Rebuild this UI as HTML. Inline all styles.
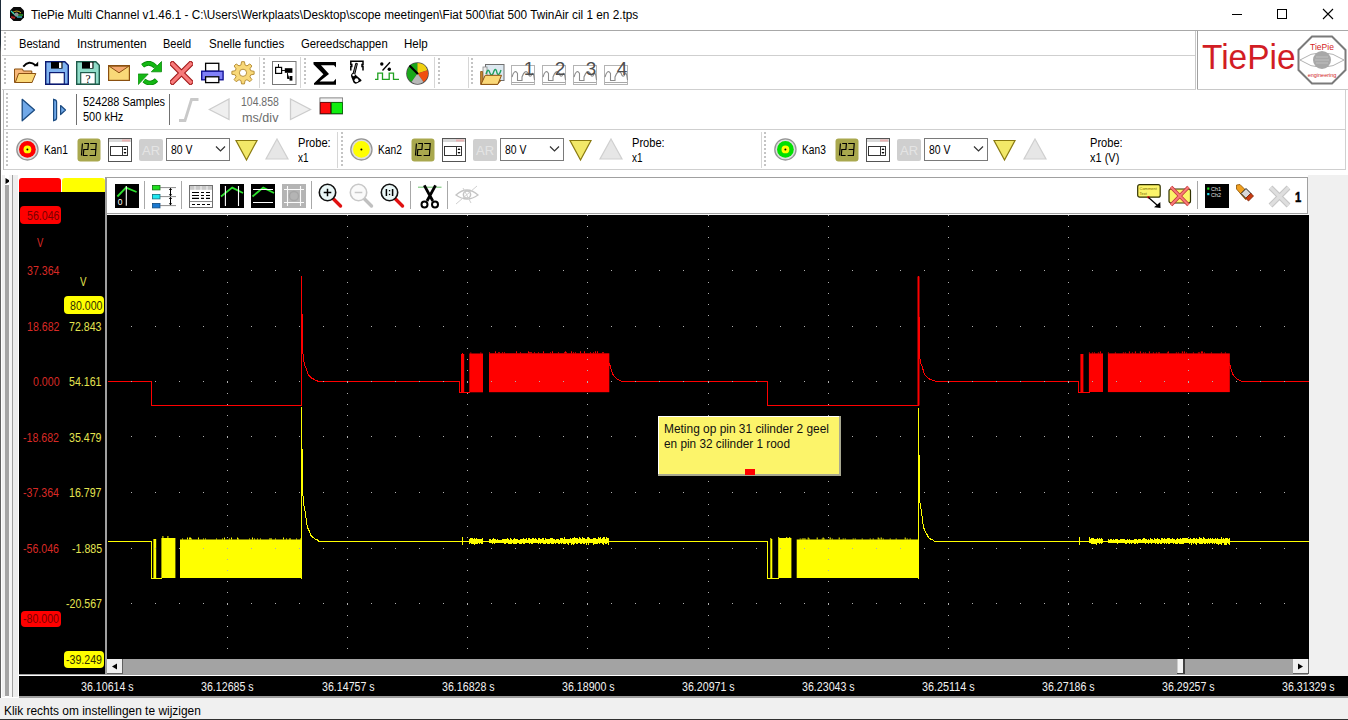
<!DOCTYPE html><html><head><meta charset="utf-8"><style>
html,body{margin:0;padding:0}
body{width:1348px;height:720px;position:relative;overflow:hidden;background:#fff;font-family:"Liberation Sans",sans-serif}
.t{position:absolute;white-space:nowrap;line-height:normal;transform-origin:0 0}
svg{display:block}
</style></head><body>
<div style="position:absolute;left:0px;top:0px;width:1348px;height:30px;background:#fff;"></div>
<div style="position:absolute;left:0px;top:0px;width:1px;height:720px;background:linear-gradient(#1c2a38 0px,#24303c 44px,#6a6a6a 52px,#707070 720px);"></div>
<div class="t" style="left:30.50px;top:8.14px;font-size:12px;color:#000;transform:scaleX(0.9825);">TiePie Multi Channel v1.46.1 - C:\Users\Werkplaats\Desktop\scope meetingen\Fiat 500\fiat 500 TwinAir cil 1 en 2.tps</div>
<svg style="position:absolute;left:9px;top:6px;" width="16" height="16" viewBox="0 0 16 16"><polygon points="4.5,1 11.5,1 15,4.5 15,11.5 11.5,15 4.5,15 1,11.5 1,4.5" fill="#0a0a0a"/>
<path d="M3 7 Q8 3 12 7" stroke="#c8b020" stroke-width="1" fill="none"/>
<path d="M2 5 L7 10 L9 10" stroke="#30e0c0" stroke-width="1.2" fill="none"/>
<path d="M7 9 H14" stroke="#30c030" stroke-width="1.2"/>
<path d="M8 11 H13" stroke="#40d0e0" stroke-width="1.2"/>
<path d="M2 11 L6 12" stroke="#a02020" stroke-width="2"/>
<circle cx="7.5" cy="8.5" r="2" fill="#909090"/></svg>
<div style="position:absolute;left:1232px;top:14px;width:10px;height:1px;background:#000;"></div>
<div style="position:absolute;left:1277px;top:9px;width:10px;height:10px;background:transparent;border:1px solid #000;box-sizing:border-box;"></div>
<svg style="position:absolute;left:1322px;top:8px;" width="12" height="12" viewBox="0 0 12 12"><path d="M1 1L11 11M11 1L1 11" stroke="#000" stroke-width="1.1"/></svg>
<div style="position:absolute;left:1px;top:30px;width:1347px;height:1px;background:#a8a8a8;"></div>
<svg style="position:absolute;left:4px;top:32px;" width="2" height="20" viewBox="0 0 2 20"><rect x="0" y="0" width="2" height="2" fill="#c4c4c4"/><rect x="0" y="4" width="2" height="2" fill="#c4c4c4"/><rect x="0" y="8" width="2" height="2" fill="#c4c4c4"/><rect x="0" y="12" width="2" height="2" fill="#c4c4c4"/><rect x="0" y="16" width="2" height="2" fill="#c4c4c4"/></svg>
<div class="t" style="left:18.50px;top:37.14px;font-size:12px;color:#000;transform:scaleX(0.9273);">Bestand</div>
<div class="t" style="left:76.60px;top:37.14px;font-size:12px;color:#000;transform:scaleX(0.9957);">Instrumenten</div>
<div class="t" style="left:163.40px;top:37.14px;font-size:12px;color:#000;transform:scaleX(0.9153);">Beeld</div>
<div class="t" style="left:208.50px;top:37.14px;font-size:12px;color:#000;transform:scaleX(0.9641);">Snelle functies</div>
<div class="t" style="left:300.60px;top:37.14px;font-size:12px;color:#000;transform:scaleX(0.9414);">Gereedschappen</div>
<div class="t" style="left:404.40px;top:37.14px;font-size:12px;color:#000;transform:scaleX(0.9636);">Help</div>
<div style="position:absolute;left:2px;top:55px;width:1194px;height:1px;background:#cfcfcf;"></div>
<svg style="position:absolute;left:4px;top:58px;" width="2" height="28" viewBox="0 0 2 28"><rect x="0" y="0" width="2" height="2" fill="#c4c4c4"/><rect x="0" y="4" width="2" height="2" fill="#c4c4c4"/><rect x="0" y="8" width="2" height="2" fill="#c4c4c4"/><rect x="0" y="12" width="2" height="2" fill="#c4c4c4"/><rect x="0" y="16" width="2" height="2" fill="#c4c4c4"/><rect x="0" y="20" width="2" height="2" fill="#c4c4c4"/><rect x="0" y="24" width="2" height="2" fill="#c4c4c4"/></svg>
<div style="position:absolute;left:2px;top:89px;width:1194px;height:1px;background:#cfcfcf;"></div>
<div style="position:absolute;left:259px;top:57px;width:1px;height:31px;background:#d6d6d6;"></div>
<div style="position:absolute;left:300px;top:57px;width:1px;height:31px;background:#d6d6d6;"></div>
<div style="position:absolute;left:434px;top:57px;width:1px;height:31px;background:#d6d6d6;"></div>
<div style="position:absolute;left:468px;top:57px;width:1px;height:31px;background:#d6d6d6;"></div>
<svg style="position:absolute;left:263px;top:58px;" width="2" height="28" viewBox="0 0 2 28"><rect x="0" y="0" width="2" height="2" fill="#c4c4c4"/><rect x="0" y="4" width="2" height="2" fill="#c4c4c4"/><rect x="0" y="8" width="2" height="2" fill="#c4c4c4"/><rect x="0" y="12" width="2" height="2" fill="#c4c4c4"/><rect x="0" y="16" width="2" height="2" fill="#c4c4c4"/><rect x="0" y="20" width="2" height="2" fill="#c4c4c4"/><rect x="0" y="24" width="2" height="2" fill="#c4c4c4"/></svg>
<svg style="position:absolute;left:304px;top:58px;" width="2" height="28" viewBox="0 0 2 28"><rect x="0" y="0" width="2" height="2" fill="#c4c4c4"/><rect x="0" y="4" width="2" height="2" fill="#c4c4c4"/><rect x="0" y="8" width="2" height="2" fill="#c4c4c4"/><rect x="0" y="12" width="2" height="2" fill="#c4c4c4"/><rect x="0" y="16" width="2" height="2" fill="#c4c4c4"/><rect x="0" y="20" width="2" height="2" fill="#c4c4c4"/><rect x="0" y="24" width="2" height="2" fill="#c4c4c4"/></svg>
<svg style="position:absolute;left:438px;top:58px;" width="2" height="28" viewBox="0 0 2 28"><rect x="0" y="0" width="2" height="2" fill="#c4c4c4"/><rect x="0" y="4" width="2" height="2" fill="#c4c4c4"/><rect x="0" y="8" width="2" height="2" fill="#c4c4c4"/><rect x="0" y="12" width="2" height="2" fill="#c4c4c4"/><rect x="0" y="16" width="2" height="2" fill="#c4c4c4"/><rect x="0" y="20" width="2" height="2" fill="#c4c4c4"/><rect x="0" y="24" width="2" height="2" fill="#c4c4c4"/></svg>
<svg style="position:absolute;left:471px;top:58px;" width="2" height="28" viewBox="0 0 2 28"><rect x="0" y="0" width="2" height="2" fill="#c4c4c4"/><rect x="0" y="4" width="2" height="2" fill="#c4c4c4"/><rect x="0" y="8" width="2" height="2" fill="#c4c4c4"/><rect x="0" y="12" width="2" height="2" fill="#c4c4c4"/><rect x="0" y="16" width="2" height="2" fill="#c4c4c4"/><rect x="0" y="20" width="2" height="2" fill="#c4c4c4"/><rect x="0" y="24" width="2" height="2" fill="#c4c4c4"/></svg>
<div style="position:absolute;left:1195px;top:31px;width:1px;height:58px;background:#c8c8c8;"></div>
<div style="position:absolute;left:1197px;top:30px;width:151px;height:1px;background:#a8a8a8;"></div>
<div style="position:absolute;left:1197px;top:31px;width:1px;height:58px;background:#a0a0a0;"></div>
<div style="position:absolute;left:1197px;top:89px;width:151px;height:1px;background:#c8c8c8;"></div>
<div class="t" style="left:1201.80px;top:37.33px;font-size:35px;color:#d21d24;transform:scaleX(0.9551);">TiePie</div>
<svg style="position:absolute;left:1297px;top:35px;" width="50" height="50" viewBox="0 0 50 50"><polygon points="15,1.5 35,1.5 48.5,15 48.5,35 35,48.5 15,48.5 1.5,35 1.5,15" fill="#fff" stroke="#7a7a7a" stroke-width="2"/>
<text x="25" y="14.5" font-size="8.5" fill="#d21d24" text-anchor="middle" font-family="Liberation Sans">TiePie</text>
<path d="M3 25 Q25 10 47 25 Q25 40 3 25" stroke="#909090" stroke-width="0.7" fill="none"/>
<circle cx="25" cy="25" r="9" fill="#a8a8a8"/>
<path d="M19 22H31M18 25H32M19 28H31" stroke="#d0d0d0" stroke-width="0.6"/>
<text x="25" y="42" font-size="5.5" fill="#d21d24" text-anchor="middle" font-family="Liberation Sans">engineering</text></svg>
<div style="position:absolute;left:3px;top:90px;width:1px;height:84px;background:#bdbdbd;"></div>
<div style="position:absolute;left:1345px;top:90px;width:1px;height:84px;background:#d0d0d0;"></div>
<svg style="position:absolute;left:6px;top:93px;" width="2" height="34" viewBox="0 0 2 34"><rect x="0" y="0" width="2" height="2" fill="#c4c4c4"/><rect x="0" y="4" width="2" height="2" fill="#c4c4c4"/><rect x="0" y="8" width="2" height="2" fill="#c4c4c4"/><rect x="0" y="12" width="2" height="2" fill="#c4c4c4"/><rect x="0" y="16" width="2" height="2" fill="#c4c4c4"/><rect x="0" y="20" width="2" height="2" fill="#c4c4c4"/><rect x="0" y="24" width="2" height="2" fill="#c4c4c4"/><rect x="0" y="28" width="2" height="2" fill="#c4c4c4"/><rect x="0" y="32" width="2" height="2" fill="#c4c4c4"/></svg>
<div style="position:absolute;left:76px;top:94px;width:1px;height:31px;background:#707070;"></div>
<div style="position:absolute;left:169px;top:94px;width:1px;height:31px;background:#707070;"></div>
<div class="t" style="left:82.70px;top:95.14px;font-size:12px;color:#000;transform:scaleX(0.9101);">524288 Samples</div>
<div class="t" style="left:82.70px;top:110.14px;font-size:12px;color:#000;transform:scaleX(0.9159);">500 kHz</div>
<div class="t" style="left:240.90px;top:95.44px;font-size:12px;color:#6d6d6d;transform:scaleX(0.8710);">104.858</div>
<div class="t" style="left:241.50px;top:111.14px;font-size:12px;color:#6d6d6d;transform:scaleX(1.0519);">ms/div</div>
<div style="position:absolute;left:4px;top:129px;width:1342px;height:1px;background:#cfcfcf;"></div>
<svg style="position:absolute;left:6px;top:132px;" width="2" height="36" viewBox="0 0 2 36"><rect x="0" y="0" width="2" height="2" fill="#c4c4c4"/><rect x="0" y="4" width="2" height="2" fill="#c4c4c4"/><rect x="0" y="8" width="2" height="2" fill="#c4c4c4"/><rect x="0" y="12" width="2" height="2" fill="#c4c4c4"/><rect x="0" y="16" width="2" height="2" fill="#c4c4c4"/><rect x="0" y="20" width="2" height="2" fill="#c4c4c4"/><rect x="0" y="24" width="2" height="2" fill="#c4c4c4"/><rect x="0" y="28" width="2" height="2" fill="#c4c4c4"/><rect x="0" y="32" width="2" height="2" fill="#c4c4c4"/></svg>
<svg style="position:absolute;left:16px;top:138px;" width="24" height="24" viewBox="0 0 24 24"><circle cx="11.4" cy="11.4" r="10.6" fill="#dedede" stroke="#959595" stroke-width="1.3"/>
<circle cx="11.4" cy="11.4" r="8.4" fill="#ff0000"/><circle cx="11.4" cy="11.4" r="3.9" fill="#ffff00"/><circle cx="11.4" cy="11.4" r="1" fill="#000"/></svg>
<div class="t" style="left:43.70px;top:143.14px;font-size:12px;color:#000;transform:scaleX(0.8500);">Kan1</div>
<svg style="position:absolute;left:77px;top:138px;" width="24" height="24" viewBox="0 0 24 24"><rect x="0.5" y="0.5" width="23" height="23" rx="3" fill="#a9a84e"/>
<path d="M5.4 5.5 L4.5 17.5" stroke="#000" stroke-width="1.15" fill="none"/>
<path d="M7.2 5.5 H11.4 L10.9 11.5 H6.8 L6.3 17.5 H10.6" stroke="#000" stroke-width="1.15" fill="none"/>
<path d="M13.2 5.5 H19.2 L18.4 17.5 H12.6 M13.6 11.5 H18.8" stroke="#000" stroke-width="1.15" fill="none"/></svg>
<svg style="position:absolute;left:108px;top:138px;" width="25" height="25" viewBox="0 0 25 25"><rect x="0.5" y="0.5" width="23" height="23" fill="#fff" stroke="#555" stroke-width="1"/>
<rect x="1" y="1" width="22" height="3" fill="#d8d8d8"/><rect x="14" y="1.5" width="8" height="2" fill="#e8b0b0"/>
<rect x="2.5" y="8.5" width="15" height="9" fill="#fff" stroke="#333" stroke-width="1"/>
<rect x="14.5" y="8.5" width="5" height="9" fill="#fff" stroke="#333" stroke-width="1"/>
<path d="M15.5 12 L17 10 L18.5 12Z M15.5 14 L17 16 L18.5 14Z" fill="#000"/></svg>
<svg style="position:absolute;left:139px;top:139px;" width="24" height="22" viewBox="0 0 24 22"><rect x="0" y="0" width="24" height="22" rx="2" fill="#cfcfcf"/>
<text x="12" y="16" font-size="13" fill="#e4e4e4" text-anchor="middle" font-family="Liberation Sans">AR</text></svg>
<div style="position:absolute;left:166px;top:138px;width:64px;height:23px;background:#fff;border:1px solid #7a7a7a;box-sizing:border-box;"></div>
<div class="t" style="left:171.30px;top:142.94px;font-size:12px;color:#000;transform:scaleX(0.8664);">80 V</div>
<svg style="position:absolute;left:215px;top:145px;" width="12" height="8" viewBox="0 0 12 8"><path d="M1 1.5L5.5 6L10 1.5" stroke="#333" stroke-width="1.2" fill="none"/></svg>
<svg style="position:absolute;left:235px;top:139px;" width="23" height="23" viewBox="0 0 23 23"><polygon points="1,1.5 22,1.5 11.5,21" fill="#f2e868" stroke="#8a7a10" stroke-width="1.2"/></svg>
<svg style="position:absolute;left:265px;top:138px;" width="24" height="23" viewBox="0 0 24 23"><polygon points="12,1 23,21 1,21" fill="#e6e6e6" stroke="#cfcfcf" stroke-width="1.2"/></svg>
<div class="t" style="left:297.50px;top:135.94px;font-size:12px;color:#000;transform:scaleX(0.9237);">Probe:</div>
<div class="t" style="left:297.50px;top:150.64px;font-size:12px;color:#000;transform:scaleX(0.8268);">x1</div>
<div style="position:absolute;left:337px;top:132px;width:1px;height:36px;background:#d6d6d6;"></div>
<svg style="position:absolute;left:341px;top:132px;" width="2" height="36" viewBox="0 0 2 36"><rect x="0" y="0" width="2" height="2" fill="#c4c4c4"/><rect x="0" y="4" width="2" height="2" fill="#c4c4c4"/><rect x="0" y="8" width="2" height="2" fill="#c4c4c4"/><rect x="0" y="12" width="2" height="2" fill="#c4c4c4"/><rect x="0" y="16" width="2" height="2" fill="#c4c4c4"/><rect x="0" y="20" width="2" height="2" fill="#c4c4c4"/><rect x="0" y="24" width="2" height="2" fill="#c4c4c4"/><rect x="0" y="28" width="2" height="2" fill="#c4c4c4"/><rect x="0" y="32" width="2" height="2" fill="#c4c4c4"/></svg>
<svg style="position:absolute;left:350px;top:138px;" width="24" height="24" viewBox="0 0 24 24"><circle cx="11.4" cy="11.4" r="10.6" fill="#dedede" stroke="#959595" stroke-width="1.3"/>
<circle cx="11.4" cy="11.4" r="8.4" fill="#ffff00"/><circle cx="11.4" cy="11.4" r="3.9" fill="#ffff00"/><circle cx="11.4" cy="11.4" r="1" fill="#000"/></svg>
<div class="t" style="left:377.70px;top:143.14px;font-size:12px;color:#000;transform:scaleX(0.8500);">Kan2</div>
<svg style="position:absolute;left:411px;top:138px;" width="24" height="24" viewBox="0 0 24 24"><rect x="0.5" y="0.5" width="23" height="23" rx="3" fill="#a9a84e"/>
<path d="M5.4 5.5 L4.5 17.5" stroke="#000" stroke-width="1.15" fill="none"/>
<path d="M7.2 5.5 H11.4 L10.9 11.5 H6.8 L6.3 17.5 H10.6" stroke="#000" stroke-width="1.15" fill="none"/>
<path d="M13.2 5.5 H19.2 L18.4 17.5 H12.6 M13.6 11.5 H18.8" stroke="#000" stroke-width="1.15" fill="none"/></svg>
<svg style="position:absolute;left:442px;top:138px;" width="25" height="25" viewBox="0 0 25 25"><rect x="0.5" y="0.5" width="23" height="23" fill="#fff" stroke="#555" stroke-width="1"/>
<rect x="1" y="1" width="22" height="3" fill="#d8d8d8"/><rect x="14" y="1.5" width="8" height="2" fill="#e8b0b0"/>
<rect x="2.5" y="8.5" width="15" height="9" fill="#fff" stroke="#333" stroke-width="1"/>
<rect x="14.5" y="8.5" width="5" height="9" fill="#fff" stroke="#333" stroke-width="1"/>
<path d="M15.5 12 L17 10 L18.5 12Z M15.5 14 L17 16 L18.5 14Z" fill="#000"/></svg>
<svg style="position:absolute;left:473px;top:139px;" width="24" height="22" viewBox="0 0 24 22"><rect x="0" y="0" width="24" height="22" rx="2" fill="#cfcfcf"/>
<text x="12" y="16" font-size="13" fill="#e4e4e4" text-anchor="middle" font-family="Liberation Sans">AR</text></svg>
<div style="position:absolute;left:500px;top:138px;width:64px;height:23px;background:#fff;border:1px solid #7a7a7a;box-sizing:border-box;"></div>
<div class="t" style="left:505.30px;top:142.94px;font-size:12px;color:#000;transform:scaleX(0.8664);">80 V</div>
<svg style="position:absolute;left:549px;top:145px;" width="12" height="8" viewBox="0 0 12 8"><path d="M1 1.5L5.5 6L10 1.5" stroke="#333" stroke-width="1.2" fill="none"/></svg>
<svg style="position:absolute;left:569px;top:139px;" width="23" height="23" viewBox="0 0 23 23"><polygon points="1,1.5 22,1.5 11.5,21" fill="#f2e868" stroke="#8a7a10" stroke-width="1.2"/></svg>
<svg style="position:absolute;left:599px;top:138px;" width="24" height="23" viewBox="0 0 24 23"><polygon points="12,1 23,21 1,21" fill="#e6e6e6" stroke="#cfcfcf" stroke-width="1.2"/></svg>
<div class="t" style="left:631.50px;top:135.94px;font-size:12px;color:#000;transform:scaleX(0.9237);">Probe:</div>
<div class="t" style="left:631.50px;top:150.64px;font-size:12px;color:#000;transform:scaleX(0.8268);">x1</div>
<div style="position:absolute;left:761px;top:132px;width:1px;height:36px;background:#d6d6d6;"></div>
<svg style="position:absolute;left:764px;top:132px;" width="2" height="36" viewBox="0 0 2 36"><rect x="0" y="0" width="2" height="2" fill="#c4c4c4"/><rect x="0" y="4" width="2" height="2" fill="#c4c4c4"/><rect x="0" y="8" width="2" height="2" fill="#c4c4c4"/><rect x="0" y="12" width="2" height="2" fill="#c4c4c4"/><rect x="0" y="16" width="2" height="2" fill="#c4c4c4"/><rect x="0" y="20" width="2" height="2" fill="#c4c4c4"/><rect x="0" y="24" width="2" height="2" fill="#c4c4c4"/><rect x="0" y="28" width="2" height="2" fill="#c4c4c4"/><rect x="0" y="32" width="2" height="2" fill="#c4c4c4"/></svg>
<svg style="position:absolute;left:774px;top:138px;" width="24" height="24" viewBox="0 0 24 24"><circle cx="11.4" cy="11.4" r="10.6" fill="#dedede" stroke="#959595" stroke-width="1.3"/>
<circle cx="11.4" cy="11.4" r="8.4" fill="#00e000"/><circle cx="11.4" cy="11.4" r="3.9" fill="#ffff00"/><circle cx="11.4" cy="11.4" r="1" fill="#000"/></svg>
<div class="t" style="left:801.70px;top:143.14px;font-size:12px;color:#000;transform:scaleX(0.8500);">Kan3</div>
<svg style="position:absolute;left:835px;top:138px;" width="24" height="24" viewBox="0 0 24 24"><rect x="0.5" y="0.5" width="23" height="23" rx="3" fill="#a9a84e"/>
<path d="M5.4 5.5 L4.5 17.5" stroke="#000" stroke-width="1.15" fill="none"/>
<path d="M7.2 5.5 H11.4 L10.9 11.5 H6.8 L6.3 17.5 H10.6" stroke="#000" stroke-width="1.15" fill="none"/>
<path d="M13.2 5.5 H19.2 L18.4 17.5 H12.6 M13.6 11.5 H18.8" stroke="#000" stroke-width="1.15" fill="none"/></svg>
<svg style="position:absolute;left:866px;top:138px;" width="25" height="25" viewBox="0 0 25 25"><rect x="0.5" y="0.5" width="23" height="23" fill="#fff" stroke="#555" stroke-width="1"/>
<rect x="1" y="1" width="22" height="3" fill="#d8d8d8"/><rect x="14" y="1.5" width="8" height="2" fill="#e8b0b0"/>
<rect x="2.5" y="8.5" width="15" height="9" fill="#fff" stroke="#333" stroke-width="1"/>
<rect x="14.5" y="8.5" width="5" height="9" fill="#fff" stroke="#333" stroke-width="1"/>
<path d="M15.5 12 L17 10 L18.5 12Z M15.5 14 L17 16 L18.5 14Z" fill="#000"/></svg>
<svg style="position:absolute;left:897px;top:139px;" width="24" height="22" viewBox="0 0 24 22"><rect x="0" y="0" width="24" height="22" rx="2" fill="#cfcfcf"/>
<text x="12" y="16" font-size="13" fill="#e4e4e4" text-anchor="middle" font-family="Liberation Sans">AR</text></svg>
<div style="position:absolute;left:924px;top:138px;width:64px;height:23px;background:#fff;border:1px solid #7a7a7a;box-sizing:border-box;"></div>
<div class="t" style="left:929.30px;top:142.94px;font-size:12px;color:#000;transform:scaleX(0.8664);">80 V</div>
<svg style="position:absolute;left:973px;top:145px;" width="12" height="8" viewBox="0 0 12 8"><path d="M1 1.5L5.5 6L10 1.5" stroke="#333" stroke-width="1.2" fill="none"/></svg>
<svg style="position:absolute;left:993px;top:139px;" width="23" height="23" viewBox="0 0 23 23"><polygon points="1,1.5 22,1.5 11.5,21" fill="#f2e868" stroke="#8a7a10" stroke-width="1.2"/></svg>
<svg style="position:absolute;left:1023px;top:138px;" width="24" height="23" viewBox="0 0 24 23"><polygon points="12,1 23,21 1,21" fill="#e6e6e6" stroke="#cfcfcf" stroke-width="1.2"/></svg>
<div class="t" style="left:1090.30px;top:135.94px;font-size:12px;color:#000;transform:scaleX(0.9237);">Probe:</div>
<div class="t" style="left:1090.30px;top:150.64px;font-size:12px;color:#000;transform:scaleX(0.9156);">x1 (V)</div>
<div style="position:absolute;left:4px;top:169px;width:1342px;height:1px;background:#cfcfcf;"></div>
<div style="position:absolute;left:0px;top:170px;width:1348px;height:550px;background:#fff;"></div>
<div style="position:absolute;left:1px;top:170px;width:1347px;height:6px;background:#fff;"></div>
<div style="position:absolute;left:1308px;top:175px;width:40px;height:501px;background:#f0f0f0;"></div>
<svg style="position:absolute;left:4px;top:177px;" width="8" height="8" viewBox="0 0 8 8"><path d="M1.5 1 L6.5 4 L1.5 7Z" fill="#000"/></svg>
<div style="position:absolute;left:2px;top:175px;width:3px;height:522px;background:#f0f0f0;"></div>
<div style="position:absolute;left:9px;top:175px;width:3px;height:522px;background:#f6f6f6;"></div>
<div style="position:absolute;left:13px;top:175px;width:5px;height:522px;background:#eeeeee;"></div>
<div style="position:absolute;left:5px;top:185px;width:4px;height:511px;background:#a4a4a4;"></div>
<div style="position:absolute;left:12px;top:175px;width:1px;height:522px;background:#a0a0a0;"></div>
<div style="position:absolute;left:0px;top:170px;width:1px;height:550px;background:#606060;"></div>
<div style="position:absolute;left:19px;top:178px;width:42px;height:14px;background:#ff0000;border-radius:3px 3px 0 0;"></div>
<div style="position:absolute;left:62px;top:178px;width:43px;height:14px;background:#ffff00;border-radius:3px 3px 0 0;"></div>
<div style="position:absolute;left:19px;top:192px;width:86px;height:482px;background:#000;"></div>
<div style="position:absolute;left:105px;top:177px;width:2px;height:498px;background:#a0a0a0;"></div>
<div style="position:absolute;left:19px;top:674px;width:1289px;height:1px;background:#a0a0a0;"></div>
<div style="position:absolute;left:19px;top:675px;width:1289px;height:1px;background:#fff;"></div>
<div style="position:absolute;left:107px;top:177px;width:1201px;height:37px;background:#fff;border:1px solid #a0a0a0;border-left:none;box-sizing:border-box;"></div>
<div style="position:absolute;left:107px;top:214px;width:1202px;height:445px;background:#000;"></div>
<div style="position:absolute;left:107px;top:214px;width:1202px;height:1px;background:#fafafa;"></div>
<div style="position:absolute;left:107px;top:659px;width:1201px;height:15px;background:#a3a3a3;"></div>
<svg style="position:absolute;left:107px;top:659px;" width="16" height="16" viewBox="0 0 16 16"><rect x="0" y="0" width="15" height="15" fill="#f0f0f0"/><rect x="0" y="14" width="16" height="1" fill="#606060"/><rect x="15" y="0" width="1" height="15" fill="#606060"/><path d="M5 7.5 L10 4.5 L10 10.5Z" fill="#000"/></svg>
<svg style="position:absolute;left:1293px;top:659px;" width="16" height="16" viewBox="0 0 16 16"><rect x="0" y="0" width="15" height="15" fill="#f0f0f0"/><rect x="0" y="14" width="16" height="1" fill="#606060"/><rect x="15" y="0" width="1" height="15" fill="#606060"/><path d="M5 4.5 L10 7.5 L5 10.5Z" fill="#000"/></svg>
<svg style="position:absolute;left:1177px;top:659px;" width="8" height="16" viewBox="0 0 8 16"><rect x="0.5" y="0" width="7" height="15" fill="#f4f4f4"/><rect x="6" y="0" width="2" height="15" fill="#404040"/><rect x="0" y="14" width="8" height="1" fill="#404040"/></svg>
<div style="position:absolute;left:19px;top:676px;width:1329px;height:20px;background:#000;"></div>
<div style="position:absolute;left:19px;top:696px;width:1329px;height:2px;background:#a0a0a0;"></div>
<div style="position:absolute;left:0px;top:698px;width:1348px;height:22px;background:#f0f0f0;"></div>
<div style="position:absolute;left:0px;top:719px;width:1348px;height:1px;background:#303030;"></div>
<div class="t" style="left:3.60px;top:703.94px;font-size:12px;color:#000;transform:scaleX(0.9934);">Klik rechts om instellingen te wijzigen</div>
<div class="t" style="left:81.35px;top:679.94px;font-size:12px;color:#f2f2f2;transform:scaleX(0.8872);">36.10614 s</div>
<div class="t" style="left:201.45px;top:679.94px;font-size:12px;color:#f2f2f2;transform:scaleX(0.8872);">36.12685 s</div>
<div class="t" style="left:321.55px;top:679.94px;font-size:12px;color:#f2f2f2;transform:scaleX(0.8872);">36.14757 s</div>
<div class="t" style="left:441.65px;top:679.94px;font-size:12px;color:#f2f2f2;transform:scaleX(0.8872);">36.16828 s</div>
<div class="t" style="left:561.75px;top:679.94px;font-size:12px;color:#f2f2f2;transform:scaleX(0.8872);">36.18900 s</div>
<div class="t" style="left:681.85px;top:679.94px;font-size:12px;color:#f2f2f2;transform:scaleX(0.8872);">36.20971 s</div>
<div class="t" style="left:801.95px;top:679.94px;font-size:12px;color:#f2f2f2;transform:scaleX(0.8872);">36.23043 s</div>
<div class="t" style="left:922.05px;top:679.94px;font-size:12px;color:#f2f2f2;transform:scaleX(0.9009);">36.25114 s</div>
<div class="t" style="left:1042.15px;top:679.94px;font-size:12px;color:#f2f2f2;transform:scaleX(0.8872);">36.27186 s</div>
<div class="t" style="left:1162.25px;top:679.94px;font-size:12px;color:#f2f2f2;transform:scaleX(0.8872);">36.29257 s</div>
<div class="t" style="left:1282.35px;top:679.94px;font-size:12px;color:#f2f2f2;transform:scaleX(0.8872);">36.31329 s</div>
<div class="t" style="left:26.72px;top:264.44px;font-size:12px;color:#d82a26;transform:scaleX(0.8850);">37.364</div>
<div class="t" style="left:26.72px;top:319.94px;font-size:12px;color:#d82a26;transform:scaleX(0.8850);">18.682</div>
<div class="t" style="left:69.22px;top:319.94px;font-size:12px;color:#e4e450;transform:scaleX(0.8850);">72.843</div>
<div class="t" style="left:32.65px;top:375.44px;font-size:12px;color:#d82a26;transform:scaleX(0.8850);">0.000</div>
<div class="t" style="left:69.22px;top:375.44px;font-size:12px;color:#e4e450;transform:scaleX(0.8850);">54.161</div>
<div class="t" style="left:23.18px;top:430.94px;font-size:12px;color:#d82a26;transform:scaleX(0.8850);">-18.682</div>
<div class="t" style="left:69.22px;top:430.94px;font-size:12px;color:#e4e450;transform:scaleX(0.8850);">35.479</div>
<div class="t" style="left:23.18px;top:486.44px;font-size:12px;color:#d82a26;transform:scaleX(0.8850);">-37.364</div>
<div class="t" style="left:69.22px;top:486.44px;font-size:12px;color:#e4e450;transform:scaleX(0.8850);">16.797</div>
<div class="t" style="left:23.18px;top:541.94px;font-size:12px;color:#d82a26;transform:scaleX(0.8850);">-56.046</div>
<div class="t" style="left:71.61px;top:541.94px;font-size:12px;color:#e4e450;transform:scaleX(0.8850);">-1.885</div>
<div class="t" style="left:65.68px;top:597.44px;font-size:12px;color:#e4e450;transform:scaleX(0.8850);">-20.567</div>
<div class="t" style="left:37.00px;top:235.84px;font-size:12px;color:#d82a26;transform:scaleX(0.7875);">V</div>
<div class="t" style="left:80.00px;top:275.14px;font-size:12px;color:#e4e450;transform:scaleX(0.8125);">V</div>
<div style="position:absolute;left:20px;top:206px;width:41px;height:18px;background:#ff0000;border-radius:4px;"></div>
<div class="t" style="left:26.72px;top:208.64px;font-size:12px;color:#7a0000;transform:scaleX(0.8850);">56.046</div>
<div style="position:absolute;left:21px;top:611px;width:40px;height:16px;background:#ff0000;border-radius:4px;"></div>
<div class="t" style="left:23.18px;top:612.44px;font-size:12px;color:#7a0000;transform:scaleX(0.8850);">-80.000</div>
<div style="position:absolute;left:63.5px;top:296px;width:40.5px;height:17.5px;background:#ffff00;border-radius:4px;"></div>
<div class="t" style="left:69.52px;top:299.14px;font-size:12px;color:#303000;transform:scaleX(0.8850);">80.000</div>
<div style="position:absolute;left:63.5px;top:651px;width:40.5px;height:17px;background:#ffff00;border-radius:4px;"></div>
<div class="t" style="left:65.98px;top:653.14px;font-size:12px;color:#303000;transform:scaleX(0.8850);">-39.249</div>
<svg style="position:absolute;left:107px;top:214px" width="1202" height="445" viewBox="0 0 1202 445"><path d="M0.50,167.50 L44.50,167.50 L44.50,191.50 L194.50,191.50 L194.50,62.50 L195.50,135.50 L195.50,135.50 L196.50,144.50 L197.50,150.50 L199.50,155.50 L200.50,158.50 L201.50,161.50 L203.50,162.50 L204.50,164.50 L205.50,164.50 L207.50,165.50 L208.50,166.50 L209.50,166.50 L211.50,167.50 L352.50,167.50 L352.50,178.50 L362.50,178.50 M502.50,149.50 L502.50,149.50 L503.50,153.50 L504.50,156.50 L505.50,159.50 L506.50,161.50 L507.50,162.50 L508.50,163.50 L509.50,164.50 L510.50,165.50 L511.50,165.50 L512.50,166.50 L513.50,166.50 L514.50,167.50 L660.50,167.50 L660.50,191.50 L811.50,191.50 L811.50,62.50 L812.50,141.50 L812.50,141.50 L813.50,148.50 L815.50,153.50 L816.50,157.50 L817.50,160.50 L819.50,162.50 L820.50,163.50 L821.50,164.50 L823.50,165.50 L824.50,165.50 L825.50,166.50 L827.50,166.50 L828.50,167.50 L971.50,167.50 L971.50,178.50 L982.50,178.50 M1122.50,149.50 L1122.50,149.50 L1123.50,153.50 L1124.50,156.50 L1125.50,159.50 L1126.50,161.50 L1127.50,162.50 L1128.50,163.50 L1129.50,164.50 L1130.50,165.50 L1131.50,165.50 L1132.50,166.50 L1133.50,166.50 L1134.50,167.50 L1201.50,167.50" stroke="#ff0000" stroke-width="1" fill="none" shape-rendering="crispEdges"/><path d="M811.50,62.50 L811.50,191.50" stroke="#ff0000" stroke-width="2"/><g fill="#ff0000"><rect x="354.00" y="140.00" width="3.20" height="38.50"/><rect x="355.00" y="139.00" width="1" height="1"/><rect x="362.30" y="139.50" width="13.70" height="38.80"/><rect x="363.30" y="138.50" width="1" height="1"/><rect x="373.30" y="138.50" width="1" height="1"/><rect x="382.00" y="139.30" width="120.30" height="38.90"/><rect x="382.00" y="138.30" width="1" height="1"/><rect x="388.00" y="137.30" width="1" height="2"/><rect x="391.00" y="138.30" width="1" height="1"/><rect x="392.00" y="138.30" width="1" height="1"/><rect x="395.00" y="138.30" width="1" height="1"/><rect x="397.00" y="138.30" width="1" height="1"/><rect x="409.00" y="137.30" width="1" height="2"/><rect x="413.00" y="138.30" width="1" height="1"/><rect x="421.00" y="137.30" width="1" height="2"/><rect x="422.00" y="138.30" width="1" height="1"/><rect x="423.00" y="138.30" width="1" height="1"/><rect x="424.00" y="138.30" width="1" height="1"/><rect x="427.00" y="138.30" width="1" height="1"/><rect x="431.00" y="138.30" width="1" height="1"/><rect x="436.00" y="137.30" width="1" height="2"/><rect x="443.00" y="138.30" width="1" height="1"/><rect x="445.00" y="137.30" width="1" height="2"/><rect x="451.00" y="138.30" width="1" height="1"/><rect x="457.00" y="138.30" width="1" height="1"/><rect x="458.00" y="137.30" width="1" height="2"/><rect x="459.00" y="138.30" width="1" height="1"/><rect x="464.00" y="137.30" width="1" height="2"/><rect x="466.00" y="138.30" width="1" height="1"/><rect x="468.00" y="138.30" width="1" height="1"/><rect x="473.00" y="137.30" width="1" height="2"/><rect x="477.00" y="137.30" width="1" height="2"/><rect x="483.00" y="138.30" width="1" height="1"/><rect x="486.00" y="138.30" width="1" height="1"/><rect x="488.00" y="137.30" width="1" height="2"/><rect x="490.00" y="137.30" width="1" height="2"/><rect x="495.00" y="138.30" width="1" height="1"/><rect x="496.00" y="138.30" width="1" height="1"/><rect x="973.40" y="140.00" width="3.00" height="38.30"/><rect x="981.90" y="139.40" width="14.10" height="38.60"/><rect x="981.90" y="138.40" width="1" height="1"/><rect x="984.90" y="138.40" width="1" height="1"/><rect x="986.90" y="138.40" width="1" height="1"/><rect x="990.90" y="138.40" width="1" height="1"/><rect x="992.90" y="137.40" width="1" height="2"/><rect x="1000.90" y="139.40" width="121.90" height="38.70"/><rect x="1000.90" y="138.40" width="1" height="1"/><rect x="1007.90" y="138.40" width="1" height="1"/><rect x="1015.90" y="138.40" width="1" height="1"/><rect x="1017.90" y="138.40" width="1" height="1"/><rect x="1021.90" y="137.40" width="1" height="2"/><rect x="1024.90" y="138.40" width="1" height="1"/><rect x="1027.90" y="137.40" width="1" height="2"/><rect x="1032.90" y="137.40" width="1" height="2"/><rect x="1035.90" y="138.40" width="1" height="1"/><rect x="1037.90" y="138.40" width="1" height="1"/><rect x="1041.90" y="137.40" width="1" height="2"/><rect x="1045.90" y="138.40" width="1" height="1"/><rect x="1048.90" y="138.40" width="1" height="1"/><rect x="1050.90" y="138.40" width="1" height="1"/><rect x="1051.90" y="138.40" width="1" height="1"/><rect x="1059.90" y="138.40" width="1" height="1"/><rect x="1060.90" y="137.40" width="1" height="2"/><rect x="1068.90" y="138.40" width="1" height="1"/><rect x="1070.90" y="138.40" width="1" height="1"/><rect x="1074.90" y="137.40" width="1" height="2"/><rect x="1076.90" y="137.40" width="1" height="2"/><rect x="1078.90" y="138.40" width="1" height="1"/><rect x="1085.90" y="138.40" width="1" height="1"/><rect x="1090.90" y="138.40" width="1" height="1"/><rect x="1091.90" y="138.40" width="1" height="1"/><rect x="1093.90" y="137.40" width="1" height="2"/><rect x="1094.90" y="137.40" width="1" height="2"/><rect x="1096.90" y="138.40" width="1" height="1"/><rect x="1103.90" y="138.40" width="1" height="1"/><rect x="1113.90" y="138.40" width="1" height="1"/><rect x="1117.90" y="138.40" width="1" height="1"/></g><path d="M0.50,327.50 L44.50,327.50 L44.50,364.50 L54.50,364.50 M194.50,364.50 L194.50,193.50 L195.50,274.50 L195.50,274.50 L196.50,289.50 L198.50,299.50 L199.50,307.50 L200.50,313.50 L202.50,317.50 L203.50,320.50 L204.50,322.50 L206.50,323.50 L207.50,324.50 L208.50,325.50 L210.50,325.50 L211.50,327.50 L660.50,327.50 L660.50,364.50 L671.50,364.50 M811.50,364.50 L811.50,194.50 L812.50,286.50 L812.50,286.50 L814.50,297.50 L815.50,306.50 L816.50,312.50 L817.50,316.50 L819.50,319.50 L820.50,321.50 L821.50,323.50 L822.50,324.50 L824.50,325.50 L825.50,325.50 L826.50,326.50 L827.50,327.50 L1201.50,327.50" stroke="#ffff00" stroke-width="1" fill="none" shape-rendering="crispEdges"/><g fill="#ffff00"><rect x="46.40" y="325.00" width="2.80" height="39.00"/><rect x="54.40" y="324.00" width="14.00" height="40.00"/><rect x="55.40" y="322.00" width="1" height="2"/><rect x="60.40" y="322.00" width="1" height="2"/><rect x="73.00" y="325.50" width="122.00" height="38.50"/><rect x="75.00" y="324.50" width="1" height="1"/><rect x="80.00" y="323.50" width="1" height="2"/><rect x="82.00" y="323.50" width="1" height="2"/><rect x="83.00" y="323.50" width="1" height="2"/><rect x="84.00" y="324.50" width="1" height="1"/><rect x="91.00" y="323.50" width="1" height="2"/><rect x="96.00" y="324.50" width="1" height="1"/><rect x="98.00" y="324.50" width="1" height="1"/><rect x="109.00" y="324.50" width="1" height="1"/><rect x="115.00" y="324.50" width="1" height="1"/><rect x="117.00" y="323.50" width="1" height="2"/><rect x="122.00" y="324.50" width="1" height="1"/><rect x="124.00" y="323.50" width="1" height="2"/><rect x="130.00" y="323.50" width="1" height="2"/><rect x="131.00" y="324.50" width="1" height="1"/><rect x="142.00" y="324.50" width="1" height="1"/><rect x="145.00" y="323.50" width="1" height="2"/><rect x="147.00" y="324.50" width="1" height="1"/><rect x="150.00" y="324.50" width="1" height="1"/><rect x="153.00" y="324.50" width="1" height="1"/><rect x="162.00" y="324.50" width="1" height="1"/><rect x="163.00" y="324.50" width="1" height="1"/><rect x="164.00" y="324.50" width="1" height="1"/><rect x="168.00" y="324.50" width="1" height="1"/><rect x="176.00" y="323.50" width="1" height="2"/><rect x="179.00" y="324.50" width="1" height="1"/><rect x="182.00" y="324.50" width="1" height="1"/><rect x="183.00" y="324.50" width="1" height="1"/><rect x="189.00" y="324.50" width="1" height="1"/><rect x="193.00" y="324.50" width="1" height="1"/><rect x="663.30" y="325.00" width="2.00" height="39.00"/><rect x="663.30" y="324.00" width="1" height="1"/><rect x="671.20" y="324.00" width="13.20" height="40.00"/><rect x="671.20" y="323.00" width="1" height="1"/><rect x="679.20" y="323.00" width="1" height="1"/><rect x="682.20" y="323.00" width="1" height="1"/><rect x="689.70" y="325.50" width="122.00" height="38.50"/><rect x="692.70" y="324.50" width="1" height="1"/><rect x="694.70" y="324.50" width="1" height="1"/><rect x="695.70" y="324.50" width="1" height="1"/><rect x="696.70" y="324.50" width="1" height="1"/><rect x="697.70" y="324.50" width="1" height="1"/><rect x="700.70" y="323.50" width="1" height="2"/><rect x="701.70" y="324.50" width="1" height="1"/><rect x="709.70" y="323.50" width="1" height="2"/><rect x="714.70" y="324.50" width="1" height="1"/><rect x="715.70" y="323.50" width="1" height="2"/><rect x="716.70" y="324.50" width="1" height="1"/><rect x="722.70" y="323.50" width="1" height="2"/><rect x="724.70" y="324.50" width="1" height="1"/><rect x="731.70" y="323.50" width="1" height="2"/><rect x="735.70" y="324.50" width="1" height="1"/><rect x="737.70" y="324.50" width="1" height="1"/><rect x="745.70" y="324.50" width="1" height="1"/><rect x="747.70" y="324.50" width="1" height="1"/><rect x="754.70" y="324.50" width="1" height="1"/><rect x="762.70" y="324.50" width="1" height="1"/><rect x="765.70" y="324.50" width="1" height="1"/><rect x="770.70" y="323.50" width="1" height="2"/><rect x="771.70" y="324.50" width="1" height="1"/><rect x="773.70" y="323.50" width="1" height="2"/><rect x="775.70" y="324.50" width="1" height="1"/><rect x="782.70" y="324.50" width="1" height="1"/><rect x="788.70" y="324.50" width="1" height="1"/><rect x="797.70" y="323.50" width="1" height="2"/><rect x="799.70" y="324.50" width="1" height="1"/><rect x="802.70" y="324.50" width="1" height="1"/></g><g fill="#ffff00" shape-rendering="crispEdges"><rect x="355" y="323" width="1" height="8"/><rect x="362" y="325" width="1" height="5"/><rect x="363" y="324" width="1" height="5"/><rect x="364" y="324" width="1" height="6"/><rect x="365" y="324" width="1" height="6"/><rect x="366" y="325" width="1" height="5"/><rect x="367" y="324" width="1" height="7"/><rect x="368" y="325" width="1" height="5"/><rect x="369" y="324" width="1" height="6"/><rect x="370" y="325" width="1" height="5"/><rect x="371" y="325" width="1" height="4"/><rect x="372" y="325" width="1" height="5"/><rect x="373" y="325" width="1" height="4"/><rect x="374" y="325" width="1" height="5"/><rect x="375" y="324" width="1" height="6"/><rect x="382" y="325" width="1" height="4"/><rect x="383" y="325" width="1" height="4"/><rect x="384" y="326" width="1" height="3"/><rect x="385" y="325" width="1" height="5"/><rect x="386" y="324" width="1" height="5"/><rect x="387" y="325" width="1" height="5"/><rect x="388" y="325" width="1" height="4"/><rect x="389" y="326" width="1" height="3"/><rect x="390" y="325" width="1" height="4"/><rect x="391" y="326" width="1" height="3"/><rect x="392" y="326" width="1" height="3"/><rect x="393" y="326" width="1" height="3"/><rect x="394" y="326" width="1" height="3"/><rect x="395" y="325" width="1" height="4"/><rect x="396" y="325" width="1" height="4"/><rect x="397" y="325" width="1" height="5"/><rect x="398" y="325" width="1" height="5"/><rect x="399" y="325" width="1" height="4"/><rect x="400" y="324" width="1" height="5"/><rect x="401" y="325" width="1" height="5"/><rect x="402" y="326" width="1" height="4"/><rect x="403" y="324" width="1" height="6"/><rect x="404" y="325" width="1" height="5"/><rect x="405" y="326" width="1" height="3"/><rect x="406" y="325" width="1" height="5"/><rect x="407" y="324" width="1" height="6"/><rect x="408" y="325" width="1" height="5"/><rect x="409" y="325" width="1" height="5"/><rect x="410" y="325" width="1" height="4"/><rect x="411" y="326" width="1" height="3"/><rect x="412" y="326" width="1" height="4"/><rect x="413" y="325" width="1" height="5"/><rect x="414" y="325" width="1" height="5"/><rect x="415" y="325" width="1" height="4"/><rect x="416" y="324" width="1" height="6"/><rect x="417" y="325" width="1" height="5"/><rect x="418" y="325" width="1" height="4"/><rect x="419" y="324" width="1" height="5"/><rect x="420" y="326" width="1" height="3"/><rect x="421" y="324" width="1" height="5"/><rect x="422" y="324" width="1" height="6"/><rect x="423" y="325" width="1" height="4"/><rect x="424" y="325" width="1" height="5"/><rect x="425" y="324" width="1" height="6"/><rect x="426" y="324" width="1" height="5"/><rect x="427" y="325" width="1" height="4"/><rect x="428" y="324" width="1" height="5"/><rect x="429" y="325" width="1" height="4"/><rect x="430" y="326" width="1" height="3"/><rect x="431" y="324" width="1" height="6"/><rect x="432" y="324" width="1" height="5"/><rect x="433" y="325" width="1" height="5"/><rect x="434" y="325" width="1" height="4"/><rect x="435" y="324" width="1" height="5"/><rect x="436" y="324" width="1" height="6"/><rect x="437" y="326" width="1" height="4"/><rect x="438" y="324" width="1" height="6"/><rect x="439" y="325" width="1" height="4"/><rect x="440" y="325" width="1" height="5"/><rect x="441" y="325" width="1" height="5"/><rect x="442" y="325" width="1" height="5"/><rect x="443" y="324" width="1" height="5"/><rect x="444" y="324" width="1" height="6"/><rect x="445" y="324" width="1" height="6"/><rect x="446" y="325" width="1" height="5"/><rect x="447" y="325" width="1" height="4"/><rect x="448" y="326" width="1" height="4"/><rect x="449" y="325" width="1" height="4"/><rect x="450" y="325" width="1" height="4"/><rect x="451" y="325" width="1" height="5"/><rect x="452" y="326" width="1" height="4"/><rect x="453" y="324" width="1" height="5"/><rect x="454" y="324" width="1" height="6"/><rect x="455" y="324" width="1" height="5"/><rect x="456" y="325" width="1" height="5"/><rect x="457" y="323" width="1" height="7"/><rect x="458" y="325" width="1" height="5"/><rect x="459" y="325" width="1" height="4"/><rect x="460" y="325" width="1" height="5"/><rect x="461" y="325" width="1" height="6"/><rect x="462" y="325" width="1" height="4"/><rect x="463" y="324" width="1" height="5"/><rect x="464" y="325" width="1" height="6"/><rect x="465" y="324" width="1" height="6"/><rect x="466" y="324" width="1" height="7"/><rect x="467" y="323" width="1" height="7"/><rect x="468" y="324" width="1" height="5"/><rect x="469" y="324" width="1" height="6"/><rect x="470" y="324" width="1" height="6"/><rect x="471" y="325" width="1" height="4"/><rect x="472" y="323" width="1" height="6"/><rect x="473" y="324" width="1" height="6"/><rect x="474" y="325" width="1" height="5"/><rect x="475" y="323" width="1" height="6"/><rect x="476" y="324" width="1" height="6"/><rect x="477" y="324" width="1" height="6"/><rect x="478" y="325" width="1" height="4"/><rect x="479" y="325" width="1" height="6"/><rect x="480" y="324" width="1" height="5"/><rect x="481" y="323" width="1" height="8"/><rect x="482" y="324" width="1" height="5"/><rect x="483" y="325" width="1" height="4"/><rect x="484" y="325" width="1" height="4"/><rect x="485" y="325" width="1" height="4"/><rect x="486" y="324" width="1" height="7"/><rect x="487" y="324" width="1" height="6"/><rect x="488" y="324" width="1" height="6"/><rect x="489" y="325" width="1" height="5"/><rect x="490" y="325" width="1" height="5"/><rect x="491" y="323" width="1" height="6"/><rect x="492" y="324" width="1" height="6"/><rect x="493" y="323" width="1" height="6"/><rect x="494" y="325" width="1" height="4"/><rect x="495" y="324" width="1" height="6"/><rect x="496" y="323" width="1" height="8"/><rect x="497" y="323" width="1" height="6"/><rect x="498" y="325" width="1" height="5"/><rect x="499" y="323" width="1" height="7"/><rect x="500" y="324" width="1" height="5"/><rect x="501" y="324" width="1" height="7"/><rect x="972" y="323" width="1" height="8"/><rect x="982" y="323" width="1" height="6"/><rect x="983" y="325" width="1" height="4"/><rect x="984" y="324" width="1" height="6"/><rect x="985" y="324" width="1" height="6"/><rect x="986" y="324" width="1" height="6"/><rect x="987" y="325" width="1" height="5"/><rect x="988" y="325" width="1" height="5"/><rect x="989" y="325" width="1" height="6"/><rect x="990" y="324" width="1" height="5"/><rect x="991" y="325" width="1" height="4"/><rect x="992" y="324" width="1" height="6"/><rect x="993" y="325" width="1" height="4"/><rect x="994" y="324" width="1" height="6"/><rect x="995" y="325" width="1" height="4"/><rect x="1001" y="325" width="1" height="4"/><rect x="1002" y="326" width="1" height="3"/><rect x="1003" y="325" width="1" height="4"/><rect x="1004" y="325" width="1" height="4"/><rect x="1005" y="326" width="1" height="3"/><rect x="1006" y="325" width="1" height="4"/><rect x="1007" y="326" width="1" height="3"/><rect x="1008" y="325" width="1" height="4"/><rect x="1009" y="325" width="1" height="4"/><rect x="1010" y="325" width="1" height="5"/><rect x="1011" y="326" width="1" height="3"/><rect x="1012" y="326" width="1" height="3"/><rect x="1013" y="325" width="1" height="4"/><rect x="1014" y="325" width="1" height="4"/><rect x="1015" y="325" width="1" height="4"/><rect x="1016" y="325" width="1" height="4"/><rect x="1017" y="325" width="1" height="4"/><rect x="1018" y="326" width="1" height="4"/><rect x="1019" y="326" width="1" height="4"/><rect x="1020" y="325" width="1" height="4"/><rect x="1021" y="326" width="1" height="3"/><rect x="1022" y="325" width="1" height="5"/><rect x="1023" y="326" width="1" height="3"/><rect x="1024" y="326" width="1" height="4"/><rect x="1025" y="326" width="1" height="3"/><rect x="1026" y="326" width="1" height="3"/><rect x="1027" y="325" width="1" height="5"/><rect x="1028" y="325" width="1" height="5"/><rect x="1029" y="325" width="1" height="4"/><rect x="1030" y="326" width="1" height="4"/><rect x="1031" y="325" width="1" height="4"/><rect x="1032" y="325" width="1" height="4"/><rect x="1033" y="325" width="1" height="4"/><rect x="1034" y="326" width="1" height="3"/><rect x="1035" y="325" width="1" height="4"/><rect x="1036" y="324" width="1" height="5"/><rect x="1037" y="324" width="1" height="5"/><rect x="1038" y="325" width="1" height="5"/><rect x="1039" y="325" width="1" height="4"/><rect x="1040" y="326" width="1" height="3"/><rect x="1041" y="325" width="1" height="5"/><rect x="1042" y="326" width="1" height="3"/><rect x="1043" y="324" width="1" height="5"/><rect x="1044" y="325" width="1" height="5"/><rect x="1045" y="325" width="1" height="4"/><rect x="1046" y="326" width="1" height="3"/><rect x="1047" y="324" width="1" height="5"/><rect x="1048" y="325" width="1" height="5"/><rect x="1049" y="325" width="1" height="4"/><rect x="1050" y="324" width="1" height="6"/><rect x="1051" y="325" width="1" height="5"/><rect x="1052" y="325" width="1" height="4"/><rect x="1053" y="326" width="1" height="4"/><rect x="1054" y="324" width="1" height="6"/><rect x="1055" y="324" width="1" height="5"/><rect x="1056" y="325" width="1" height="4"/><rect x="1057" y="324" width="1" height="6"/><rect x="1058" y="325" width="1" height="4"/><rect x="1059" y="325" width="1" height="5"/><rect x="1060" y="324" width="1" height="5"/><rect x="1061" y="324" width="1" height="6"/><rect x="1062" y="324" width="1" height="6"/><rect x="1063" y="325" width="1" height="4"/><rect x="1064" y="325" width="1" height="4"/><rect x="1065" y="324" width="1" height="5"/><rect x="1066" y="325" width="1" height="5"/><rect x="1067" y="325" width="1" height="4"/><rect x="1068" y="326" width="1" height="4"/><rect x="1069" y="325" width="1" height="5"/><rect x="1070" y="324" width="1" height="6"/><rect x="1071" y="325" width="1" height="4"/><rect x="1072" y="325" width="1" height="5"/><rect x="1073" y="324" width="1" height="6"/><rect x="1074" y="325" width="1" height="5"/><rect x="1075" y="324" width="1" height="6"/><rect x="1076" y="324" width="1" height="6"/><rect x="1077" y="324" width="1" height="5"/><rect x="1078" y="324" width="1" height="5"/><rect x="1079" y="324" width="1" height="5"/><rect x="1080" y="324" width="1" height="5"/><rect x="1081" y="325" width="1" height="4"/><rect x="1082" y="325" width="1" height="5"/><rect x="1083" y="324" width="1" height="5"/><rect x="1084" y="325" width="1" height="6"/><rect x="1085" y="325" width="1" height="4"/><rect x="1086" y="324" width="1" height="6"/><rect x="1087" y="324" width="1" height="5"/><rect x="1088" y="325" width="1" height="5"/><rect x="1089" y="324" width="1" height="7"/><rect x="1090" y="325" width="1" height="4"/><rect x="1091" y="325" width="1" height="4"/><rect x="1092" y="323" width="1" height="7"/><rect x="1093" y="324" width="1" height="6"/><rect x="1094" y="324" width="1" height="6"/><rect x="1095" y="325" width="1" height="5"/><rect x="1096" y="323" width="1" height="6"/><rect x="1097" y="324" width="1" height="6"/><rect x="1098" y="325" width="1" height="5"/><rect x="1099" y="325" width="1" height="4"/><rect x="1100" y="325" width="1" height="5"/><rect x="1101" y="324" width="1" height="5"/><rect x="1102" y="325" width="1" height="5"/><rect x="1103" y="324" width="1" height="5"/><rect x="1104" y="325" width="1" height="4"/><rect x="1105" y="324" width="1" height="6"/><rect x="1106" y="325" width="1" height="4"/><rect x="1107" y="325" width="1" height="5"/><rect x="1108" y="324" width="1" height="5"/><rect x="1109" y="325" width="1" height="5"/><rect x="1110" y="324" width="1" height="6"/><rect x="1111" y="325" width="1" height="6"/><rect x="1112" y="325" width="1" height="5"/><rect x="1113" y="325" width="1" height="5"/><rect x="1114" y="323" width="1" height="8"/><rect x="1115" y="325" width="1" height="4"/><rect x="1116" y="324" width="1" height="5"/><rect x="1117" y="325" width="1" height="6"/><rect x="1118" y="324" width="1" height="7"/><rect x="1119" y="324" width="1" height="7"/><rect x="1120" y="324" width="1" height="5"/><rect x="1121" y="325" width="1" height="5"/><rect x="1122" y="324" width="1" height="7"/></g><g fill="#b0b0b0"><rect x="120" y="1" width="1" height="1"/><rect x="120" y="12" width="1" height="1"/><rect x="120" y="23" width="1" height="1"/><rect x="120" y="34" width="1" height="1"/><rect x="120" y="45" width="1" height="1"/><rect x="120" y="56" width="1" height="1"/><rect x="120" y="68" width="1" height="1"/><rect x="120" y="79" width="1" height="1"/><rect x="120" y="90" width="1" height="1"/><rect x="120" y="101" width="1" height="1"/><rect x="120" y="112" width="1" height="1"/><rect x="120" y="123" width="1" height="1"/><rect x="120" y="134" width="1" height="1"/><rect x="120" y="145" width="1" height="1"/><rect x="120" y="156" width="1" height="1"/><rect x="120" y="168" width="1" height="1"/><rect x="120" y="179" width="1" height="1"/><rect x="120" y="190" width="1" height="1"/><rect x="120" y="201" width="1" height="1"/><rect x="120" y="212" width="1" height="1"/><rect x="120" y="223" width="1" height="1"/><rect x="120" y="234" width="1" height="1"/><rect x="120" y="245" width="1" height="1"/><rect x="120" y="256" width="1" height="1"/><rect x="120" y="267" width="1" height="1"/><rect x="120" y="278" width="1" height="1"/><rect x="120" y="290" width="1" height="1"/><rect x="120" y="301" width="1" height="1"/><rect x="120" y="312" width="1" height="1"/><rect x="120" y="323" width="1" height="1"/><rect x="120" y="334" width="1" height="1"/><rect x="120" y="345" width="1" height="1"/><rect x="120" y="356" width="1" height="1"/><rect x="120" y="367" width="1" height="1"/><rect x="120" y="378" width="1" height="1"/><rect x="120" y="390" width="1" height="1"/><rect x="120" y="401" width="1" height="1"/><rect x="120" y="412" width="1" height="1"/><rect x="120" y="423" width="1" height="1"/><rect x="120" y="434" width="1" height="1"/><rect x="240" y="1" width="1" height="1"/><rect x="240" y="12" width="1" height="1"/><rect x="240" y="23" width="1" height="1"/><rect x="240" y="34" width="1" height="1"/><rect x="240" y="45" width="1" height="1"/><rect x="240" y="56" width="1" height="1"/><rect x="240" y="68" width="1" height="1"/><rect x="240" y="79" width="1" height="1"/><rect x="240" y="90" width="1" height="1"/><rect x="240" y="101" width="1" height="1"/><rect x="240" y="112" width="1" height="1"/><rect x="240" y="123" width="1" height="1"/><rect x="240" y="134" width="1" height="1"/><rect x="240" y="145" width="1" height="1"/><rect x="240" y="156" width="1" height="1"/><rect x="240" y="168" width="1" height="1"/><rect x="240" y="179" width="1" height="1"/><rect x="240" y="190" width="1" height="1"/><rect x="240" y="201" width="1" height="1"/><rect x="240" y="212" width="1" height="1"/><rect x="240" y="223" width="1" height="1"/><rect x="240" y="234" width="1" height="1"/><rect x="240" y="245" width="1" height="1"/><rect x="240" y="256" width="1" height="1"/><rect x="240" y="267" width="1" height="1"/><rect x="240" y="278" width="1" height="1"/><rect x="240" y="290" width="1" height="1"/><rect x="240" y="301" width="1" height="1"/><rect x="240" y="312" width="1" height="1"/><rect x="240" y="323" width="1" height="1"/><rect x="240" y="334" width="1" height="1"/><rect x="240" y="345" width="1" height="1"/><rect x="240" y="356" width="1" height="1"/><rect x="240" y="367" width="1" height="1"/><rect x="240" y="378" width="1" height="1"/><rect x="240" y="390" width="1" height="1"/><rect x="240" y="401" width="1" height="1"/><rect x="240" y="412" width="1" height="1"/><rect x="240" y="423" width="1" height="1"/><rect x="240" y="434" width="1" height="1"/><rect x="360" y="1" width="1" height="1"/><rect x="360" y="12" width="1" height="1"/><rect x="360" y="23" width="1" height="1"/><rect x="360" y="34" width="1" height="1"/><rect x="360" y="45" width="1" height="1"/><rect x="360" y="56" width="1" height="1"/><rect x="360" y="68" width="1" height="1"/><rect x="360" y="79" width="1" height="1"/><rect x="360" y="90" width="1" height="1"/><rect x="360" y="101" width="1" height="1"/><rect x="360" y="112" width="1" height="1"/><rect x="360" y="123" width="1" height="1"/><rect x="360" y="134" width="1" height="1"/><rect x="360" y="145" width="1" height="1"/><rect x="360" y="156" width="1" height="1"/><rect x="360" y="168" width="1" height="1"/><rect x="360" y="179" width="1" height="1"/><rect x="360" y="190" width="1" height="1"/><rect x="360" y="201" width="1" height="1"/><rect x="360" y="212" width="1" height="1"/><rect x="360" y="223" width="1" height="1"/><rect x="360" y="234" width="1" height="1"/><rect x="360" y="245" width="1" height="1"/><rect x="360" y="256" width="1" height="1"/><rect x="360" y="267" width="1" height="1"/><rect x="360" y="278" width="1" height="1"/><rect x="360" y="290" width="1" height="1"/><rect x="360" y="301" width="1" height="1"/><rect x="360" y="312" width="1" height="1"/><rect x="360" y="323" width="1" height="1"/><rect x="360" y="334" width="1" height="1"/><rect x="360" y="345" width="1" height="1"/><rect x="360" y="356" width="1" height="1"/><rect x="360" y="367" width="1" height="1"/><rect x="360" y="378" width="1" height="1"/><rect x="360" y="390" width="1" height="1"/><rect x="360" y="401" width="1" height="1"/><rect x="360" y="412" width="1" height="1"/><rect x="360" y="423" width="1" height="1"/><rect x="360" y="434" width="1" height="1"/><rect x="480" y="1" width="1" height="1"/><rect x="480" y="12" width="1" height="1"/><rect x="480" y="23" width="1" height="1"/><rect x="480" y="34" width="1" height="1"/><rect x="480" y="45" width="1" height="1"/><rect x="480" y="56" width="1" height="1"/><rect x="480" y="68" width="1" height="1"/><rect x="480" y="79" width="1" height="1"/><rect x="480" y="90" width="1" height="1"/><rect x="480" y="101" width="1" height="1"/><rect x="480" y="112" width="1" height="1"/><rect x="480" y="123" width="1" height="1"/><rect x="480" y="134" width="1" height="1"/><rect x="480" y="145" width="1" height="1"/><rect x="480" y="156" width="1" height="1"/><rect x="480" y="168" width="1" height="1"/><rect x="480" y="179" width="1" height="1"/><rect x="480" y="190" width="1" height="1"/><rect x="480" y="201" width="1" height="1"/><rect x="480" y="212" width="1" height="1"/><rect x="480" y="223" width="1" height="1"/><rect x="480" y="234" width="1" height="1"/><rect x="480" y="245" width="1" height="1"/><rect x="480" y="256" width="1" height="1"/><rect x="480" y="267" width="1" height="1"/><rect x="480" y="278" width="1" height="1"/><rect x="480" y="290" width="1" height="1"/><rect x="480" y="301" width="1" height="1"/><rect x="480" y="312" width="1" height="1"/><rect x="480" y="323" width="1" height="1"/><rect x="480" y="334" width="1" height="1"/><rect x="480" y="345" width="1" height="1"/><rect x="480" y="356" width="1" height="1"/><rect x="480" y="367" width="1" height="1"/><rect x="480" y="378" width="1" height="1"/><rect x="480" y="390" width="1" height="1"/><rect x="480" y="401" width="1" height="1"/><rect x="480" y="412" width="1" height="1"/><rect x="480" y="423" width="1" height="1"/><rect x="480" y="434" width="1" height="1"/><rect x="601" y="1" width="1" height="1"/><rect x="601" y="12" width="1" height="1"/><rect x="601" y="23" width="1" height="1"/><rect x="601" y="34" width="1" height="1"/><rect x="601" y="45" width="1" height="1"/><rect x="601" y="56" width="1" height="1"/><rect x="601" y="68" width="1" height="1"/><rect x="601" y="79" width="1" height="1"/><rect x="601" y="90" width="1" height="1"/><rect x="601" y="101" width="1" height="1"/><rect x="601" y="112" width="1" height="1"/><rect x="601" y="123" width="1" height="1"/><rect x="601" y="134" width="1" height="1"/><rect x="601" y="145" width="1" height="1"/><rect x="601" y="156" width="1" height="1"/><rect x="601" y="168" width="1" height="1"/><rect x="601" y="179" width="1" height="1"/><rect x="601" y="190" width="1" height="1"/><rect x="601" y="201" width="1" height="1"/><rect x="601" y="212" width="1" height="1"/><rect x="601" y="223" width="1" height="1"/><rect x="601" y="234" width="1" height="1"/><rect x="601" y="245" width="1" height="1"/><rect x="601" y="256" width="1" height="1"/><rect x="601" y="267" width="1" height="1"/><rect x="601" y="278" width="1" height="1"/><rect x="601" y="290" width="1" height="1"/><rect x="601" y="301" width="1" height="1"/><rect x="601" y="312" width="1" height="1"/><rect x="601" y="323" width="1" height="1"/><rect x="601" y="334" width="1" height="1"/><rect x="601" y="345" width="1" height="1"/><rect x="601" y="356" width="1" height="1"/><rect x="601" y="367" width="1" height="1"/><rect x="601" y="378" width="1" height="1"/><rect x="601" y="390" width="1" height="1"/><rect x="601" y="401" width="1" height="1"/><rect x="601" y="412" width="1" height="1"/><rect x="601" y="423" width="1" height="1"/><rect x="601" y="434" width="1" height="1"/><rect x="721" y="1" width="1" height="1"/><rect x="721" y="12" width="1" height="1"/><rect x="721" y="23" width="1" height="1"/><rect x="721" y="34" width="1" height="1"/><rect x="721" y="45" width="1" height="1"/><rect x="721" y="56" width="1" height="1"/><rect x="721" y="68" width="1" height="1"/><rect x="721" y="79" width="1" height="1"/><rect x="721" y="90" width="1" height="1"/><rect x="721" y="101" width="1" height="1"/><rect x="721" y="112" width="1" height="1"/><rect x="721" y="123" width="1" height="1"/><rect x="721" y="134" width="1" height="1"/><rect x="721" y="145" width="1" height="1"/><rect x="721" y="156" width="1" height="1"/><rect x="721" y="168" width="1" height="1"/><rect x="721" y="179" width="1" height="1"/><rect x="721" y="190" width="1" height="1"/><rect x="721" y="201" width="1" height="1"/><rect x="721" y="212" width="1" height="1"/><rect x="721" y="223" width="1" height="1"/><rect x="721" y="234" width="1" height="1"/><rect x="721" y="245" width="1" height="1"/><rect x="721" y="256" width="1" height="1"/><rect x="721" y="267" width="1" height="1"/><rect x="721" y="278" width="1" height="1"/><rect x="721" y="290" width="1" height="1"/><rect x="721" y="301" width="1" height="1"/><rect x="721" y="312" width="1" height="1"/><rect x="721" y="323" width="1" height="1"/><rect x="721" y="334" width="1" height="1"/><rect x="721" y="345" width="1" height="1"/><rect x="721" y="356" width="1" height="1"/><rect x="721" y="367" width="1" height="1"/><rect x="721" y="378" width="1" height="1"/><rect x="721" y="390" width="1" height="1"/><rect x="721" y="401" width="1" height="1"/><rect x="721" y="412" width="1" height="1"/><rect x="721" y="423" width="1" height="1"/><rect x="721" y="434" width="1" height="1"/><rect x="841" y="1" width="1" height="1"/><rect x="841" y="12" width="1" height="1"/><rect x="841" y="23" width="1" height="1"/><rect x="841" y="34" width="1" height="1"/><rect x="841" y="45" width="1" height="1"/><rect x="841" y="56" width="1" height="1"/><rect x="841" y="68" width="1" height="1"/><rect x="841" y="79" width="1" height="1"/><rect x="841" y="90" width="1" height="1"/><rect x="841" y="101" width="1" height="1"/><rect x="841" y="112" width="1" height="1"/><rect x="841" y="123" width="1" height="1"/><rect x="841" y="134" width="1" height="1"/><rect x="841" y="145" width="1" height="1"/><rect x="841" y="156" width="1" height="1"/><rect x="841" y="168" width="1" height="1"/><rect x="841" y="179" width="1" height="1"/><rect x="841" y="190" width="1" height="1"/><rect x="841" y="201" width="1" height="1"/><rect x="841" y="212" width="1" height="1"/><rect x="841" y="223" width="1" height="1"/><rect x="841" y="234" width="1" height="1"/><rect x="841" y="245" width="1" height="1"/><rect x="841" y="256" width="1" height="1"/><rect x="841" y="267" width="1" height="1"/><rect x="841" y="278" width="1" height="1"/><rect x="841" y="290" width="1" height="1"/><rect x="841" y="301" width="1" height="1"/><rect x="841" y="312" width="1" height="1"/><rect x="841" y="323" width="1" height="1"/><rect x="841" y="334" width="1" height="1"/><rect x="841" y="345" width="1" height="1"/><rect x="841" y="356" width="1" height="1"/><rect x="841" y="367" width="1" height="1"/><rect x="841" y="378" width="1" height="1"/><rect x="841" y="390" width="1" height="1"/><rect x="841" y="401" width="1" height="1"/><rect x="841" y="412" width="1" height="1"/><rect x="841" y="423" width="1" height="1"/><rect x="841" y="434" width="1" height="1"/><rect x="961" y="1" width="1" height="1"/><rect x="961" y="12" width="1" height="1"/><rect x="961" y="23" width="1" height="1"/><rect x="961" y="34" width="1" height="1"/><rect x="961" y="45" width="1" height="1"/><rect x="961" y="56" width="1" height="1"/><rect x="961" y="68" width="1" height="1"/><rect x="961" y="79" width="1" height="1"/><rect x="961" y="90" width="1" height="1"/><rect x="961" y="101" width="1" height="1"/><rect x="961" y="112" width="1" height="1"/><rect x="961" y="123" width="1" height="1"/><rect x="961" y="134" width="1" height="1"/><rect x="961" y="145" width="1" height="1"/><rect x="961" y="156" width="1" height="1"/><rect x="961" y="168" width="1" height="1"/><rect x="961" y="179" width="1" height="1"/><rect x="961" y="190" width="1" height="1"/><rect x="961" y="201" width="1" height="1"/><rect x="961" y="212" width="1" height="1"/><rect x="961" y="223" width="1" height="1"/><rect x="961" y="234" width="1" height="1"/><rect x="961" y="245" width="1" height="1"/><rect x="961" y="256" width="1" height="1"/><rect x="961" y="267" width="1" height="1"/><rect x="961" y="278" width="1" height="1"/><rect x="961" y="290" width="1" height="1"/><rect x="961" y="301" width="1" height="1"/><rect x="961" y="312" width="1" height="1"/><rect x="961" y="323" width="1" height="1"/><rect x="961" y="334" width="1" height="1"/><rect x="961" y="345" width="1" height="1"/><rect x="961" y="356" width="1" height="1"/><rect x="961" y="367" width="1" height="1"/><rect x="961" y="378" width="1" height="1"/><rect x="961" y="390" width="1" height="1"/><rect x="961" y="401" width="1" height="1"/><rect x="961" y="412" width="1" height="1"/><rect x="961" y="423" width="1" height="1"/><rect x="961" y="434" width="1" height="1"/><rect x="1081" y="1" width="1" height="1"/><rect x="1081" y="12" width="1" height="1"/><rect x="1081" y="23" width="1" height="1"/><rect x="1081" y="34" width="1" height="1"/><rect x="1081" y="45" width="1" height="1"/><rect x="1081" y="56" width="1" height="1"/><rect x="1081" y="68" width="1" height="1"/><rect x="1081" y="79" width="1" height="1"/><rect x="1081" y="90" width="1" height="1"/><rect x="1081" y="101" width="1" height="1"/><rect x="1081" y="112" width="1" height="1"/><rect x="1081" y="123" width="1" height="1"/><rect x="1081" y="134" width="1" height="1"/><rect x="1081" y="145" width="1" height="1"/><rect x="1081" y="156" width="1" height="1"/><rect x="1081" y="168" width="1" height="1"/><rect x="1081" y="179" width="1" height="1"/><rect x="1081" y="190" width="1" height="1"/><rect x="1081" y="201" width="1" height="1"/><rect x="1081" y="212" width="1" height="1"/><rect x="1081" y="223" width="1" height="1"/><rect x="1081" y="234" width="1" height="1"/><rect x="1081" y="245" width="1" height="1"/><rect x="1081" y="256" width="1" height="1"/><rect x="1081" y="267" width="1" height="1"/><rect x="1081" y="278" width="1" height="1"/><rect x="1081" y="290" width="1" height="1"/><rect x="1081" y="301" width="1" height="1"/><rect x="1081" y="312" width="1" height="1"/><rect x="1081" y="323" width="1" height="1"/><rect x="1081" y="334" width="1" height="1"/><rect x="1081" y="345" width="1" height="1"/><rect x="1081" y="356" width="1" height="1"/><rect x="1081" y="367" width="1" height="1"/><rect x="1081" y="378" width="1" height="1"/><rect x="1081" y="390" width="1" height="1"/><rect x="1081" y="401" width="1" height="1"/><rect x="1081" y="412" width="1" height="1"/><rect x="1081" y="423" width="1" height="1"/><rect x="1081" y="434" width="1" height="1"/><rect x="24" y="56" width="1" height="1"/><rect x="48" y="56" width="1" height="1"/><rect x="72" y="56" width="1" height="1"/><rect x="96" y="56" width="1" height="1"/><rect x="120" y="56" width="1" height="1"/><rect x="144" y="56" width="1" height="1"/><rect x="168" y="56" width="1" height="1"/><rect x="192" y="56" width="1" height="1"/><rect x="216" y="56" width="1" height="1"/><rect x="240" y="56" width="1" height="1"/><rect x="264" y="56" width="1" height="1"/><rect x="288" y="56" width="1" height="1"/><rect x="312" y="56" width="1" height="1"/><rect x="336" y="56" width="1" height="1"/><rect x="360" y="56" width="1" height="1"/><rect x="384" y="56" width="1" height="1"/><rect x="408" y="56" width="1" height="1"/><rect x="432" y="56" width="1" height="1"/><rect x="456" y="56" width="1" height="1"/><rect x="480" y="56" width="1" height="1"/><rect x="504" y="56" width="1" height="1"/><rect x="528" y="56" width="1" height="1"/><rect x="552" y="56" width="1" height="1"/><rect x="576" y="56" width="1" height="1"/><rect x="601" y="56" width="1" height="1"/><rect x="625" y="56" width="1" height="1"/><rect x="649" y="56" width="1" height="1"/><rect x="673" y="56" width="1" height="1"/><rect x="697" y="56" width="1" height="1"/><rect x="721" y="56" width="1" height="1"/><rect x="745" y="56" width="1" height="1"/><rect x="769" y="56" width="1" height="1"/><rect x="793" y="56" width="1" height="1"/><rect x="817" y="56" width="1" height="1"/><rect x="841" y="56" width="1" height="1"/><rect x="865" y="56" width="1" height="1"/><rect x="889" y="56" width="1" height="1"/><rect x="913" y="56" width="1" height="1"/><rect x="937" y="56" width="1" height="1"/><rect x="961" y="56" width="1" height="1"/><rect x="985" y="56" width="1" height="1"/><rect x="1009" y="56" width="1" height="1"/><rect x="1033" y="56" width="1" height="1"/><rect x="1057" y="56" width="1" height="1"/><rect x="1081" y="56" width="1" height="1"/><rect x="1105" y="56" width="1" height="1"/><rect x="1129" y="56" width="1" height="1"/><rect x="1153" y="56" width="1" height="1"/><rect x="1177" y="56" width="1" height="1"/><rect x="24" y="112" width="1" height="1"/><rect x="48" y="112" width="1" height="1"/><rect x="72" y="112" width="1" height="1"/><rect x="96" y="112" width="1" height="1"/><rect x="120" y="112" width="1" height="1"/><rect x="144" y="112" width="1" height="1"/><rect x="168" y="112" width="1" height="1"/><rect x="192" y="112" width="1" height="1"/><rect x="216" y="112" width="1" height="1"/><rect x="240" y="112" width="1" height="1"/><rect x="264" y="112" width="1" height="1"/><rect x="288" y="112" width="1" height="1"/><rect x="312" y="112" width="1" height="1"/><rect x="336" y="112" width="1" height="1"/><rect x="360" y="112" width="1" height="1"/><rect x="384" y="112" width="1" height="1"/><rect x="408" y="112" width="1" height="1"/><rect x="432" y="112" width="1" height="1"/><rect x="456" y="112" width="1" height="1"/><rect x="480" y="112" width="1" height="1"/><rect x="504" y="112" width="1" height="1"/><rect x="528" y="112" width="1" height="1"/><rect x="552" y="112" width="1" height="1"/><rect x="576" y="112" width="1" height="1"/><rect x="601" y="112" width="1" height="1"/><rect x="625" y="112" width="1" height="1"/><rect x="649" y="112" width="1" height="1"/><rect x="673" y="112" width="1" height="1"/><rect x="697" y="112" width="1" height="1"/><rect x="721" y="112" width="1" height="1"/><rect x="745" y="112" width="1" height="1"/><rect x="769" y="112" width="1" height="1"/><rect x="793" y="112" width="1" height="1"/><rect x="817" y="112" width="1" height="1"/><rect x="841" y="112" width="1" height="1"/><rect x="865" y="112" width="1" height="1"/><rect x="889" y="112" width="1" height="1"/><rect x="913" y="112" width="1" height="1"/><rect x="937" y="112" width="1" height="1"/><rect x="961" y="112" width="1" height="1"/><rect x="985" y="112" width="1" height="1"/><rect x="1009" y="112" width="1" height="1"/><rect x="1033" y="112" width="1" height="1"/><rect x="1057" y="112" width="1" height="1"/><rect x="1081" y="112" width="1" height="1"/><rect x="1105" y="112" width="1" height="1"/><rect x="1129" y="112" width="1" height="1"/><rect x="1153" y="112" width="1" height="1"/><rect x="1177" y="112" width="1" height="1"/><rect x="24" y="167" width="1" height="1"/><rect x="48" y="167" width="1" height="1"/><rect x="72" y="167" width="1" height="1"/><rect x="96" y="167" width="1" height="1"/><rect x="120" y="167" width="1" height="1"/><rect x="144" y="167" width="1" height="1"/><rect x="168" y="167" width="1" height="1"/><rect x="192" y="167" width="1" height="1"/><rect x="216" y="167" width="1" height="1"/><rect x="240" y="167" width="1" height="1"/><rect x="264" y="167" width="1" height="1"/><rect x="288" y="167" width="1" height="1"/><rect x="312" y="167" width="1" height="1"/><rect x="336" y="167" width="1" height="1"/><rect x="360" y="167" width="1" height="1"/><rect x="384" y="167" width="1" height="1"/><rect x="408" y="167" width="1" height="1"/><rect x="432" y="167" width="1" height="1"/><rect x="456" y="167" width="1" height="1"/><rect x="480" y="167" width="1" height="1"/><rect x="504" y="167" width="1" height="1"/><rect x="528" y="167" width="1" height="1"/><rect x="552" y="167" width="1" height="1"/><rect x="576" y="167" width="1" height="1"/><rect x="601" y="167" width="1" height="1"/><rect x="625" y="167" width="1" height="1"/><rect x="649" y="167" width="1" height="1"/><rect x="673" y="167" width="1" height="1"/><rect x="697" y="167" width="1" height="1"/><rect x="721" y="167" width="1" height="1"/><rect x="745" y="167" width="1" height="1"/><rect x="769" y="167" width="1" height="1"/><rect x="793" y="167" width="1" height="1"/><rect x="817" y="167" width="1" height="1"/><rect x="841" y="167" width="1" height="1"/><rect x="865" y="167" width="1" height="1"/><rect x="889" y="167" width="1" height="1"/><rect x="913" y="167" width="1" height="1"/><rect x="937" y="167" width="1" height="1"/><rect x="961" y="167" width="1" height="1"/><rect x="985" y="167" width="1" height="1"/><rect x="1009" y="167" width="1" height="1"/><rect x="1033" y="167" width="1" height="1"/><rect x="1057" y="167" width="1" height="1"/><rect x="1081" y="167" width="1" height="1"/><rect x="1105" y="167" width="1" height="1"/><rect x="1129" y="167" width="1" height="1"/><rect x="1153" y="167" width="1" height="1"/><rect x="1177" y="167" width="1" height="1"/><rect x="24" y="222" width="1" height="1"/><rect x="48" y="222" width="1" height="1"/><rect x="72" y="222" width="1" height="1"/><rect x="96" y="222" width="1" height="1"/><rect x="120" y="222" width="1" height="1"/><rect x="144" y="222" width="1" height="1"/><rect x="168" y="222" width="1" height="1"/><rect x="192" y="222" width="1" height="1"/><rect x="216" y="222" width="1" height="1"/><rect x="240" y="222" width="1" height="1"/><rect x="264" y="222" width="1" height="1"/><rect x="288" y="222" width="1" height="1"/><rect x="312" y="222" width="1" height="1"/><rect x="336" y="222" width="1" height="1"/><rect x="360" y="222" width="1" height="1"/><rect x="384" y="222" width="1" height="1"/><rect x="408" y="222" width="1" height="1"/><rect x="432" y="222" width="1" height="1"/><rect x="456" y="222" width="1" height="1"/><rect x="480" y="222" width="1" height="1"/><rect x="504" y="222" width="1" height="1"/><rect x="528" y="222" width="1" height="1"/><rect x="552" y="222" width="1" height="1"/><rect x="576" y="222" width="1" height="1"/><rect x="601" y="222" width="1" height="1"/><rect x="625" y="222" width="1" height="1"/><rect x="649" y="222" width="1" height="1"/><rect x="673" y="222" width="1" height="1"/><rect x="697" y="222" width="1" height="1"/><rect x="721" y="222" width="1" height="1"/><rect x="745" y="222" width="1" height="1"/><rect x="769" y="222" width="1" height="1"/><rect x="793" y="222" width="1" height="1"/><rect x="817" y="222" width="1" height="1"/><rect x="841" y="222" width="1" height="1"/><rect x="865" y="222" width="1" height="1"/><rect x="889" y="222" width="1" height="1"/><rect x="913" y="222" width="1" height="1"/><rect x="937" y="222" width="1" height="1"/><rect x="961" y="222" width="1" height="1"/><rect x="985" y="222" width="1" height="1"/><rect x="1009" y="222" width="1" height="1"/><rect x="1033" y="222" width="1" height="1"/><rect x="1057" y="222" width="1" height="1"/><rect x="1081" y="222" width="1" height="1"/><rect x="1105" y="222" width="1" height="1"/><rect x="1129" y="222" width="1" height="1"/><rect x="1153" y="222" width="1" height="1"/><rect x="1177" y="222" width="1" height="1"/><rect x="24" y="278" width="1" height="1"/><rect x="48" y="278" width="1" height="1"/><rect x="72" y="278" width="1" height="1"/><rect x="96" y="278" width="1" height="1"/><rect x="120" y="278" width="1" height="1"/><rect x="144" y="278" width="1" height="1"/><rect x="168" y="278" width="1" height="1"/><rect x="192" y="278" width="1" height="1"/><rect x="216" y="278" width="1" height="1"/><rect x="240" y="278" width="1" height="1"/><rect x="264" y="278" width="1" height="1"/><rect x="288" y="278" width="1" height="1"/><rect x="312" y="278" width="1" height="1"/><rect x="336" y="278" width="1" height="1"/><rect x="360" y="278" width="1" height="1"/><rect x="384" y="278" width="1" height="1"/><rect x="408" y="278" width="1" height="1"/><rect x="432" y="278" width="1" height="1"/><rect x="456" y="278" width="1" height="1"/><rect x="480" y="278" width="1" height="1"/><rect x="504" y="278" width="1" height="1"/><rect x="528" y="278" width="1" height="1"/><rect x="552" y="278" width="1" height="1"/><rect x="576" y="278" width="1" height="1"/><rect x="601" y="278" width="1" height="1"/><rect x="625" y="278" width="1" height="1"/><rect x="649" y="278" width="1" height="1"/><rect x="673" y="278" width="1" height="1"/><rect x="697" y="278" width="1" height="1"/><rect x="721" y="278" width="1" height="1"/><rect x="745" y="278" width="1" height="1"/><rect x="769" y="278" width="1" height="1"/><rect x="793" y="278" width="1" height="1"/><rect x="817" y="278" width="1" height="1"/><rect x="841" y="278" width="1" height="1"/><rect x="865" y="278" width="1" height="1"/><rect x="889" y="278" width="1" height="1"/><rect x="913" y="278" width="1" height="1"/><rect x="937" y="278" width="1" height="1"/><rect x="961" y="278" width="1" height="1"/><rect x="985" y="278" width="1" height="1"/><rect x="1009" y="278" width="1" height="1"/><rect x="1033" y="278" width="1" height="1"/><rect x="1057" y="278" width="1" height="1"/><rect x="1081" y="278" width="1" height="1"/><rect x="1105" y="278" width="1" height="1"/><rect x="1129" y="278" width="1" height="1"/><rect x="1153" y="278" width="1" height="1"/><rect x="1177" y="278" width="1" height="1"/><rect x="24" y="334" width="1" height="1"/><rect x="48" y="334" width="1" height="1"/><rect x="72" y="334" width="1" height="1"/><rect x="96" y="334" width="1" height="1"/><rect x="120" y="334" width="1" height="1"/><rect x="144" y="334" width="1" height="1"/><rect x="168" y="334" width="1" height="1"/><rect x="192" y="334" width="1" height="1"/><rect x="216" y="334" width="1" height="1"/><rect x="240" y="334" width="1" height="1"/><rect x="264" y="334" width="1" height="1"/><rect x="288" y="334" width="1" height="1"/><rect x="312" y="334" width="1" height="1"/><rect x="336" y="334" width="1" height="1"/><rect x="360" y="334" width="1" height="1"/><rect x="384" y="334" width="1" height="1"/><rect x="408" y="334" width="1" height="1"/><rect x="432" y="334" width="1" height="1"/><rect x="456" y="334" width="1" height="1"/><rect x="480" y="334" width="1" height="1"/><rect x="504" y="334" width="1" height="1"/><rect x="528" y="334" width="1" height="1"/><rect x="552" y="334" width="1" height="1"/><rect x="576" y="334" width="1" height="1"/><rect x="601" y="334" width="1" height="1"/><rect x="625" y="334" width="1" height="1"/><rect x="649" y="334" width="1" height="1"/><rect x="673" y="334" width="1" height="1"/><rect x="697" y="334" width="1" height="1"/><rect x="721" y="334" width="1" height="1"/><rect x="745" y="334" width="1" height="1"/><rect x="769" y="334" width="1" height="1"/><rect x="793" y="334" width="1" height="1"/><rect x="817" y="334" width="1" height="1"/><rect x="841" y="334" width="1" height="1"/><rect x="865" y="334" width="1" height="1"/><rect x="889" y="334" width="1" height="1"/><rect x="913" y="334" width="1" height="1"/><rect x="937" y="334" width="1" height="1"/><rect x="961" y="334" width="1" height="1"/><rect x="985" y="334" width="1" height="1"/><rect x="1009" y="334" width="1" height="1"/><rect x="1033" y="334" width="1" height="1"/><rect x="1057" y="334" width="1" height="1"/><rect x="1081" y="334" width="1" height="1"/><rect x="1105" y="334" width="1" height="1"/><rect x="1129" y="334" width="1" height="1"/><rect x="1153" y="334" width="1" height="1"/><rect x="1177" y="334" width="1" height="1"/><rect x="24" y="389" width="1" height="1"/><rect x="48" y="389" width="1" height="1"/><rect x="72" y="389" width="1" height="1"/><rect x="96" y="389" width="1" height="1"/><rect x="120" y="389" width="1" height="1"/><rect x="144" y="389" width="1" height="1"/><rect x="168" y="389" width="1" height="1"/><rect x="192" y="389" width="1" height="1"/><rect x="216" y="389" width="1" height="1"/><rect x="240" y="389" width="1" height="1"/><rect x="264" y="389" width="1" height="1"/><rect x="288" y="389" width="1" height="1"/><rect x="312" y="389" width="1" height="1"/><rect x="336" y="389" width="1" height="1"/><rect x="360" y="389" width="1" height="1"/><rect x="384" y="389" width="1" height="1"/><rect x="408" y="389" width="1" height="1"/><rect x="432" y="389" width="1" height="1"/><rect x="456" y="389" width="1" height="1"/><rect x="480" y="389" width="1" height="1"/><rect x="504" y="389" width="1" height="1"/><rect x="528" y="389" width="1" height="1"/><rect x="552" y="389" width="1" height="1"/><rect x="576" y="389" width="1" height="1"/><rect x="601" y="389" width="1" height="1"/><rect x="625" y="389" width="1" height="1"/><rect x="649" y="389" width="1" height="1"/><rect x="673" y="389" width="1" height="1"/><rect x="697" y="389" width="1" height="1"/><rect x="721" y="389" width="1" height="1"/><rect x="745" y="389" width="1" height="1"/><rect x="769" y="389" width="1" height="1"/><rect x="793" y="389" width="1" height="1"/><rect x="817" y="389" width="1" height="1"/><rect x="841" y="389" width="1" height="1"/><rect x="865" y="389" width="1" height="1"/><rect x="889" y="389" width="1" height="1"/><rect x="913" y="389" width="1" height="1"/><rect x="937" y="389" width="1" height="1"/><rect x="961" y="389" width="1" height="1"/><rect x="985" y="389" width="1" height="1"/><rect x="1009" y="389" width="1" height="1"/><rect x="1033" y="389" width="1" height="1"/><rect x="1057" y="389" width="1" height="1"/><rect x="1081" y="389" width="1" height="1"/><rect x="1105" y="389" width="1" height="1"/><rect x="1129" y="389" width="1" height="1"/><rect x="1153" y="389" width="1" height="1"/><rect x="1177" y="389" width="1" height="1"/></g></svg>
<div style="position:absolute;left:658px;top:416px;width:183px;height:60px;background:#a8a890;"></div>
<div style="position:absolute;left:658px;top:416px;width:181px;height:58px;background:#ffffff;"></div>
<div style="position:absolute;left:659px;top:417px;width:180px;height:57px;background:#fcf46a;"></div>
<div class="t" style="left:663.60px;top:422.34px;font-size:12px;color:#101010;transform:scaleX(0.9928);">Meting op pin 31 cilinder 2 geel</div>
<div class="t" style="left:663.60px;top:437.14px;font-size:12px;color:#101010;transform:scaleX(0.9836);">en pin 32 cilinder 1 rood</div>
<div style="position:absolute;left:745px;top:469px;width:10px;height:6px;background:#ff0000;"></div>
<svg style="position:absolute;left:14px;top:61px;" width="25" height="23" viewBox="0 0 25 23"><path d="M9.3 5.6 Q15 -1.5 21.5 4.3" stroke="#000" stroke-width="1.9" fill="none"/>
<polygon points="19.8,5.2 24.2,5.2 24.2,0.6" fill="#000"/>
<polygon points="0.5,8 8.5,8 9.3,10 17.8,10 17.8,21.5 0.5,21.5" fill="#f7b87a" stroke="#8a5010" stroke-width="1"/>
<polygon points="1.3,21.5 18,21.5 21.8,12.5 4.6,12.5" fill="#fad878" stroke="#8a5010" stroke-width="1"/></svg>
<svg style="position:absolute;left:45px;top:61px;" width="24" height="24" viewBox="0 0 24 24"><path d="M0.7 0.7 H19.8 L23.3 4.2 V23.3 H0.7Z" fill="#80b3f0" stroke="#0b1a70" stroke-width="1.4"/>
<rect x="6" y="1" width="11.5" height="6.6" fill="#000"/><rect x="14" y="1.6" width="2.4" height="5.4" fill="#fff"/>
<rect x="4.7" y="11.6" width="14.6" height="11.4" fill="#fff" stroke="#0b1a70" stroke-width="1.2"/></svg>
<svg style="position:absolute;left:76px;top:61px;" width="24" height="24" viewBox="0 0 24 24"><path d="M0.7 0.7 H19.8 L23.3 4.2 V23.3 H0.7Z" fill="#8fdcc8" stroke="#1e5a4a" stroke-width="1.4"/>
<rect x="6" y="1" width="11.5" height="6.6" fill="#000"/><rect x="14" y="1.6" width="2.4" height="5.4" fill="#fff"/>
<rect x="4.7" y="11.6" width="14.6" height="11.4" fill="#fff" stroke="#1e5a4a" stroke-width="1.2"/><text x="12" y="22" font-size="11.5" text-anchor="middle" font-family="Liberation Serif" fill="#000">?</text></svg>
<svg style="position:absolute;left:108px;top:65px;" width="22" height="16" viewBox="0 0 22 16"><rect x="0.6" y="0.6" width="20.8" height="14.8" fill="#f9d878" stroke="#8a5010" stroke-width="1.2"/>
<polygon points="1.2,1.2 11,7.8 20.8,1.2" fill="#f5a870" stroke="#8a5010" stroke-width="1"/></svg>
<svg style="position:absolute;left:138px;top:61px;" width="24" height="24" viewBox="0 0 24 24"><path d="M4.6 4.8 Q11.5 -0.8 17.5 5.8" stroke="#0a8a0a" stroke-width="4.6" fill="none"/>
<path d="M4.6 4.8 Q11.5 -0.8 17.5 5.8" stroke="#14b814" stroke-width="3" fill="none"/>
<polygon points="13.3,10.8 23.5,10.8 23.5,0.5" fill="#14b814" stroke="#0a8a0a" stroke-width="0.8"/>
<path d="M6 19.5 Q12.5 25 18.5 19" stroke="#0a8a0a" stroke-width="4.6" fill="none"/>
<path d="M6 19.5 Q12.5 25 18.5 19" stroke="#14b814" stroke-width="3" fill="none"/>
<polygon points="0.2,13 10.2,13 0.2,23.6" fill="#14b814" stroke="#0a8a0a" stroke-width="0.8"/></svg>
<svg style="position:absolute;left:170px;top:61px;" width="23" height="24" viewBox="0 0 23 24"><path d="M2.5 3 L20.5 21 M20.5 3 L2.5 21" stroke="#a01818" stroke-width="5.6" stroke-linecap="square"/>
<path d="M2.5 3 L20.5 21 M20.5 3 L2.5 21" stroke="#f77a7a" stroke-width="3.4" stroke-linecap="square"/></svg>
<svg style="position:absolute;left:201px;top:61px;" width="23" height="23" viewBox="0 0 23 23"><rect x="4.6" y="2.3" width="13.2" height="8" fill="#fff" stroke="#000" stroke-width="1.3"/>
<rect x="0.7" y="10.2" width="21.4" height="8.6" fill="#8080f8" stroke="#0a0a90" stroke-width="1.3"/>
<rect x="4.6" y="15.8" width="13.2" height="5.8" fill="#fff" stroke="#000" stroke-width="1.3"/></svg>
<svg style="position:absolute;left:231px;top:61px;" width="24" height="24" viewBox="0 0 24 24"><polygon points="10.55,0.69 13.45,0.69 14.08,4.07 15.99,4.87 18.83,2.92 20.88,4.97 18.93,7.81 19.73,9.72 23.11,10.35 23.11,13.25 19.73,13.88 18.93,15.79 20.88,18.63 18.83,20.68 15.99,18.73 14.08,19.53 13.45,22.91 10.55,22.91 9.92,19.53 8.01,18.73 5.17,20.68 3.12,18.63 5.07,15.79 4.27,13.88 0.89,13.25 0.89,10.35 4.27,9.72 5.07,7.81 3.12,4.97 5.17,2.92 8.01,4.87 9.92,4.07" fill="#f8d878" stroke="#b8903a" stroke-width="1"/><circle cx="12" cy="11.8" r="3.6" fill="#fff" stroke="#b8903a" stroke-width="1"/></svg>
<svg style="position:absolute;left:272px;top:61px;" width="25" height="24" viewBox="0 0 25 24"><rect x="0.5" y="0.5" width="23.5" height="23" fill="#fff" stroke="#777" stroke-width="1"/>
<rect x="3.6" y="6.4" width="6" height="6" fill="#fff" stroke="#000" stroke-width="1.2"/>
<path d="M6.5 3 V6 M9.6 9.5 H13 M15.5 12 V17.5 H17.5" stroke="#000" stroke-width="0.9"/>
<rect x="12.8" y="7.2" width="7.6" height="4.6" fill="#000"/><rect x="17.5" y="15" width="2.9" height="4.6" fill="#000"/></svg>
<svg style="position:absolute;left:313px;top:62px;" width="24" height="24" viewBox="0 0 24 24"><polygon points="0.5,0 23,0 23,5.5 21,3.2 8,3.2 16,12 6.5,19.6 20.5,19.6 23,16.8 23,22.8 1,22.8 1,21.3 10.4,12.3 0.5,2.2" fill="#000"/></svg>
<svg style="position:absolute;left:349px;top:60px;" width="16" height="25" viewBox="0 0 16 25"><path d="M1.8 10.5 V6.6 H2.8 V4.4 H1.8 V1.2 H14 V4.4 H13 V6.6 H14 V10.5" stroke="#000" stroke-width="1.5" fill="none"/>
<path d="M6.8 3.2 L8.4 3.6 L5.6 15 L3.8 14.5Z" fill="#888" stroke="#000" stroke-width="1"/>
<path d="M4.2 12.8 Q1.2 14 2.3 17 L4.5 22.5 Q5.5 24 7.5 23.5 L12 21.3 Q13.2 20.5 12 19.5 Z" fill="#000"/>
<circle cx="4.6" cy="15" r="1.3" fill="#fff"/><circle cx="7.5" cy="20.3" r="2" fill="#fff"/></svg>
<svg style="position:absolute;left:374px;top:61px;" width="26" height="20" viewBox="0 0 26 20"><circle cx="7.8" cy="3" r="1.7" fill="#000"/><circle cx="15.3" cy="8.3" r="1.7" fill="#000"/><path d="M8.5 9.5 L16 1.2" stroke="#000" stroke-width="1.3"/>
<path d="M1 18.4 H3.8 V12.2 H8.5 V18.4 H15.2 V12.2 H19.5 V18.4 H25" stroke="#20a020" stroke-width="1.3" fill="none"/></svg>
<svg style="position:absolute;left:406px;top:62px;" width="23" height="23" viewBox="0 0 23 23"><circle cx="11.5" cy="11.5" r="11.3" fill="#505050"/><path d="M11.5,11.5 L5.53,20.02 A10.4,10.4 0 0 1 11.50,1.10Z" fill="#1aa81a"/><path d="M11.5,11.5 L11.50,1.10 A10.4,10.4 0 0 1 21.39,8.29Z" fill="#f0d010"/><path d="M11.5,11.5 L21.39,8.29 A10.4,10.4 0 0 1 17.47,20.02Z" fill="#f05010"/><path d="M11.5,11.5 L17.47,20.02 A10.4,10.4 0 0 1 5.53,20.02Z" fill="#b8b8b8"/><path d="M3.5 3.5 L12 12" stroke="#000" stroke-width="2.2"/></svg>
<svg style="position:absolute;left:480px;top:64px;" width="25" height="21" viewBox="0 0 25 21"><rect x="5.5" y="0.5" width="18.5" height="16" fill="#dde8f0" stroke="#707070" stroke-width="1"/>
<rect x="3" y="3" width="4" height="14" fill="#eee" stroke="#888" stroke-width="0.8"/>
<path d="M6 10 Q8 3 10 9 Q12 14 14 7 Q16 3 17 9 Q19 13 21 6" stroke="#20a060" stroke-width="1.4" fill="none"/>
<polygon points="0.6,7.5 2.5,7.5 3,16.5 21,16.5 17.5,20.4 0.6,20.4" fill="#c88a30" stroke="#8a5010" stroke-width="0.8"/>
<polygon points="1,20.4 17.8,20.4 21.5,11.3 5.2,11.3" fill="#fad878" stroke="#8a5010" stroke-width="1"/></svg>
<svg style="position:absolute;left:511px;top:60px;" width="25" height="25" viewBox="0 0 25 25"><rect x="0.5" y="5.5" width="23" height="19" fill="#fff" stroke="#b4b4b4" stroke-width="1"/>
<path d="M1 17 Q3.5 8.5 6.5 13.5 V20.5 H11 V17 Q14 9 17 13 Q19 19 21 14 Q22.5 11 23.5 20" stroke="#8a8a8a" stroke-width="1.1" fill="none"/>
<path d="M1 22.5 H23" stroke="#a8a8a8" stroke-width="1"/>
<text x="18" y="15" font-size="19" font-family="Liberation Sans" fill="#4e4e4e" text-anchor="middle">1</text></svg>
<svg style="position:absolute;left:542px;top:60px;" width="25" height="25" viewBox="0 0 25 25"><rect x="0.5" y="5.5" width="23" height="19" fill="#fff" stroke="#b4b4b4" stroke-width="1"/>
<path d="M1 17 Q3.5 8.5 6.5 13.5 V20.5 H11 V17 Q14 9 17 13 Q19 19 21 14 Q22.5 11 23.5 20" stroke="#8a8a8a" stroke-width="1.1" fill="none"/>
<path d="M1 22.5 H23" stroke="#a8a8a8" stroke-width="1"/>
<text x="18" y="15" font-size="19" font-family="Liberation Sans" fill="#4e4e4e" text-anchor="middle">2</text></svg>
<svg style="position:absolute;left:573px;top:60px;" width="25" height="25" viewBox="0 0 25 25"><rect x="0.5" y="5.5" width="23" height="19" fill="#fff" stroke="#b4b4b4" stroke-width="1"/>
<path d="M1 17 Q3.5 8.5 6.5 13.5 V20.5 H11 V17 Q14 9 17 13 Q19 19 21 14 Q22.5 11 23.5 20" stroke="#8a8a8a" stroke-width="1.1" fill="none"/>
<path d="M1 22.5 H23" stroke="#a8a8a8" stroke-width="1"/>
<text x="18" y="15" font-size="19" font-family="Liberation Sans" fill="#4e4e4e" text-anchor="middle">3</text></svg>
<svg style="position:absolute;left:604px;top:60px;" width="25" height="25" viewBox="0 0 25 25"><rect x="0.5" y="5.5" width="23" height="19" fill="#fff" stroke="#b4b4b4" stroke-width="1"/>
<path d="M1 17 Q3.5 8.5 6.5 13.5 V20.5 H11 V17 Q14 9 17 13 Q19 19 21 14 Q22.5 11 23.5 20" stroke="#8a8a8a" stroke-width="1.1" fill="none"/>
<path d="M1 22.5 H23" stroke="#a8a8a8" stroke-width="1"/>
<text x="18" y="15" font-size="19" font-family="Liberation Sans" fill="#4e4e4e" text-anchor="middle">4</text></svg>
<svg style="position:absolute;left:21px;top:98px;" width="15" height="24" viewBox="0 0 15 24"><polygon points="1.2,1.3 13.5,12 1.2,22.7" fill="#70a8e8" stroke="#1a4a80" stroke-width="1.3" stroke-linejoin="round"/></svg>
<svg style="position:absolute;left:52px;top:98px;" width="15" height="24" viewBox="0 0 15 24"><path d="M1.6 1.3 Q4.6 1.8 4.6 4 V20 Q4.6 22.2 1.6 22.7Z" fill="#70a8e8" stroke="#1a4a80" stroke-width="1.2"/><polygon points="8.6,7.5 13.5,12 8.6,16.5" fill="#70a8e8" stroke="#1a4a80" stroke-width="1.2" stroke-linejoin="round"/></svg>
<svg style="position:absolute;left:178px;top:97px;" width="22" height="26" viewBox="0 0 22 26"><path d="M1 23.5 H7 L13.5 2.5 H20.5" stroke="#c9c9c9" stroke-width="2.8" fill="none"/></svg>
<svg style="position:absolute;left:208px;top:98px;" width="23" height="23" viewBox="0 0 23 23"><polygon points="1.3,11.5 21,1 21,21.5" fill="#efefef" stroke="#cdcdcd" stroke-width="1.3"/></svg>
<svg style="position:absolute;left:289px;top:98px;" width="23" height="23" viewBox="0 0 23 23"><polygon points="1.5,1 21.5,11.5 1.5,21.5" fill="#efefef" stroke="#cdcdcd" stroke-width="1.3"/></svg>
<svg style="position:absolute;left:319px;top:97px;" width="25" height="18" viewBox="0 0 25 18"><rect x="0.5" y="0.5" width="23.5" height="17" fill="#6a6a6a"/><rect x="1.3" y="1.3" width="22" height="3.6" fill="#f4f4f4"/>
<rect x="1.3" y="5.6" width="10.2" height="11" fill="#ff0a0a" stroke="#600" stroke-width="0.8"/><rect x="12.4" y="5.6" width="11" height="11" fill="#10ee10" stroke="#060" stroke-width="0.8"/></svg>
<div style="position:absolute;left:144px;top:181px;width:1px;height:28px;background:#a8a8a8;"></div>
<div style="position:absolute;left:181px;top:181px;width:1px;height:28px;background:#a8a8a8;"></div>
<div style="position:absolute;left:311px;top:181px;width:1px;height:28px;background:#a8a8a8;"></div>
<div style="position:absolute;left:410px;top:181px;width:1px;height:28px;background:#a8a8a8;"></div>
<div style="position:absolute;left:447px;top:181px;width:1px;height:28px;background:#a8a8a8;"></div>
<svg style="position:absolute;left:115px;top:184px;" width="24" height="24" viewBox="0 0 24 24"><rect width="24" height="24" fill="#000"/><path d="M2.4 12.5 L11 3.6 L21.6 8" stroke="#2ee02e" stroke-width="1.8" fill="none"/>
<path d="M11.3 2 V21.8" stroke="#fff" stroke-width="1.1"/><text x="5.2" y="20.5" font-size="8.5" fill="#fff" text-anchor="middle" font-family="Liberation Sans">0</text></svg>
<svg style="position:absolute;left:151px;top:184px;" width="26" height="25" viewBox="0 0 26 25"><rect x="1.4" y="1.4" width="7.6" height="4.5" fill="#20e020" stroke="#107010" stroke-width="0.8"/>
<rect x="1.4" y="10.4" width="7.6" height="4.5" fill="#20e8f0" stroke="#107080" stroke-width="0.8"/>
<rect x="1.4" y="19.4" width="7.6" height="4.5" fill="#1a78d0" stroke="#104a80" stroke-width="0.8"/>
<path d="M9 3.6 H25 M9 12.6 H25 M9 21.6 H25" stroke="#707070" stroke-width="0.8"/>
<path d="M19.5 4.2 V12 M19.5 13.2 V21" stroke="#000" stroke-width="1"/>
<path d="M17.8 6 L19.5 4 L21.2 6Z M17.8 10.2 L19.5 12.2 L21.2 10.2Z M17.8 15 L19.5 13 L21.2 15Z M17.8 19.2 L19.5 21.2 L21.2 19.2Z" fill="#000"/></svg>
<svg style="position:absolute;left:189px;top:185px;" width="24" height="23" viewBox="0 0 24 23"><rect x="0.5" y="0.5" width="23" height="22" fill="#fff" stroke="#707070" stroke-width="1"/><rect x="1" y="1" width="22" height="3.8" fill="#c8c8c8"/>
<path d="M6 1 V5 M12 1 V5 M18 1 V5" stroke="#fff" stroke-width="0.8"/><path d="M1 16.5 H23" stroke="#707070" stroke-width="0.8"/>
<path d="M3 7.5 H10 M12 7.5 H15 M17 7.5 H21 M3 10.5 H10 M12 10.5 H15 M17 10.5 H21 M3 13.4 H10 M12 13.4 H15 M17 13.4 H21 M3 19.5 H6 M8 19.5 H11 M13 19.5 H16 M18 19.5 H21" stroke="#000" stroke-width="1.1"/></svg>
<svg style="position:absolute;left:220px;top:184px;" width="24" height="24" viewBox="0 0 24 24"><rect width="24" height="24" fill="#000"/><path d="M1 12.5 L12.2 3.6 L23 9" stroke="#2ee02e" stroke-width="1.8" fill="none"/>
<path d="M5.4 2 V22 M18.5 2 V22" stroke="#fff" stroke-width="1.1"/></svg>
<svg style="position:absolute;left:251px;top:184px;" width="24" height="24" viewBox="0 0 24 24"><rect width="24" height="24" fill="#000"/><path d="M1.5 12.5 L12.2 3.6 L23 9" stroke="#2ee02e" stroke-width="1.8" fill="none"/>
<path d="M2 5.5 H22 M2 18.5 H22" stroke="#fff" stroke-width="1.1"/></svg>
<svg style="position:absolute;left:282px;top:184px;" width="24" height="24" viewBox="0 0 24 24"><rect width="24" height="24" fill="#b4b4b4"/><path d="M5.5 2 V22 M18.5 2 V22 M2 5.5 H22 M2 18.5 H22" stroke="#fafafa" stroke-width="1.1"/>
<circle cx="12" cy="12" r="4.5" fill="none" stroke="#a6a6a6" stroke-width="1.5"/></svg>
<svg style="position:absolute;left:314px;top:180px;" width="30" height="30" viewBox="0 0 30 30"><path d="M19 18.5 L26.5 26" stroke="#e01010" stroke-width="3.4" stroke-linecap="round"/>
<circle cx="13.5" cy="12.5" r="8.2" fill="#eaf7f7" stroke="#111" stroke-width="1.6"/><path d="M13.5 8.7 V16.3 M9.7 12.5 H17.3" stroke="#000" stroke-width="1.5"/></svg>
<svg style="position:absolute;left:345px;top:180px;" width="30" height="30" viewBox="0 0 30 30"><path d="M19 18.5 L26.5 26" stroke="#c0c0c0" stroke-width="3.4" stroke-linecap="round"/>
<circle cx="13.5" cy="12.5" r="8.2" fill="#fafafa" stroke="#c8c8c8" stroke-width="1.6"/><path d="M9.7 12.5 H17.3" stroke="#c8c8c8" stroke-width="1.5"/></svg>
<svg style="position:absolute;left:376px;top:180px;" width="30" height="30" viewBox="0 0 30 30"><path d="M19 18.5 L26.5 26" stroke="#e01010" stroke-width="3.4" stroke-linecap="round"/>
<circle cx="13.5" cy="12.5" r="8.2" fill="#eaf7f7" stroke="#111" stroke-width="1.6"/><path d="M10.4 9 V16 M16.6 9 V16" stroke="#000" stroke-width="1.5"/><rect x="12.9" y="10" width="1.3" height="1.3" fill="#000"/><rect x="12.9" y="13.8" width="1.3" height="1.3" fill="#000"/></svg>
<svg style="position:absolute;left:417px;top:183px;" width="26" height="27" viewBox="0 0 26 27"><path d="M1 4.2 H24.5" stroke="#40b040" stroke-width="0.8"/>
<path d="M7.3 2.3 L15.8 18 M18.5 2.3 L10 18" stroke="#000" stroke-width="2.8"/>
<circle cx="7.5" cy="21.5" r="3" fill="none" stroke="#000" stroke-width="2"/><circle cx="18" cy="21.5" r="3" fill="none" stroke="#000" stroke-width="2"/></svg>
<svg style="position:absolute;left:455px;top:185px;" width="24" height="22" viewBox="0 0 24 22"><path d="M1 10 Q12 0 23 10 Q12 18 1 10Z" fill="none" stroke="#c4c4c4" stroke-width="1.3"/><circle cx="12" cy="9.5" r="3.6" fill="none" stroke="#c4c4c4" stroke-width="1.5"/>
<path d="M1 19 L22 1 M8 3 L16 18" stroke="#d0d0d0" stroke-width="1"/></svg>
<svg style="position:absolute;left:1137px;top:184px;" width="25" height="25" viewBox="0 0 25 25"><rect x="0.7" y="0.7" width="22.5" height="12.5" rx="2" fill="#fcf46a" stroke="#303000" stroke-width="1.2"/>
<text x="2.5" y="5.5" font-size="4" fill="#7a6a00" font-family="Liberation Sans">Comment</text><text x="2.5" y="10.5" font-size="4" fill="#7a6a00" font-family="Liberation Sans">Text</text>
<circle cx="11.5" cy="13.2" r="1.2" fill="#e01010"/><path d="M11.5 13.5 L20 21" stroke="#000" stroke-width="1.2"/><polygon points="23.5,24 17,23.2 23.3,18" fill="#000"/></svg>
<svg style="position:absolute;left:1168px;top:184px;" width="25" height="25" viewBox="0 0 25 25"><rect x="1" y="5" width="21.5" height="14" rx="2" fill="#fcf46a" stroke="#303000" stroke-width="1.2"/>
<path d="M3 3 L20.5 21 M20.5 3 L3 21" stroke="#c03838" stroke-width="3.6"/><path d="M3 3 L20.5 21 M20.5 3 L3 21" stroke="#f77a7a" stroke-width="2"/></svg>
<div style="position:absolute;left:1197px;top:181px;width:1px;height:28px;background:#a8a8a8;"></div>
<svg style="position:absolute;left:1205px;top:184px;" width="24" height="24" viewBox="0 0 24 24"><rect width="24" height="24" fill="#000"/><rect x="2.2" y="3.5" width="2.2" height="2.2" fill="#20e020"/><rect x="2.2" y="9" width="2.2" height="2.2" fill="#20d8e8"/>
<text x="6" y="7" font-size="5.5" fill="#e0e0e0" font-family="Liberation Sans">Ch1</text><text x="6" y="12.5" font-size="5.5" fill="#e0e0e0" font-family="Liberation Sans">Ch2</text></svg>
<svg style="position:absolute;left:1236px;top:184px;" width="18" height="19" viewBox="0 0 18 19"><polygon points="0.5,1 4,0.5 14.5,11 9.5,15.5 0.5,5" fill="#f0a020" stroke="#8a5000" stroke-width="0.8"/>
<polygon points="5,9.5 10,4.5 15,9.5 10,14.5" fill="#d8d8d8" stroke="#000" stroke-width="0.9"/>
<polygon points="9.7,14.3 14.8,9.3 17.5,12 12.5,17" fill="#c83a10" stroke="#7a2000" stroke-width="0.8"/></svg>
<svg style="position:absolute;left:1268px;top:185px;" width="23" height="23" viewBox="0 0 23 23"><path d="M2.5 2.5 L20.5 20.5 M20.5 2.5 L2.5 20.5" stroke="#c6c6c6" stroke-width="5.4"/><path d="M2.5 2.5 L20.5 20.5 M20.5 2.5 L2.5 20.5" stroke="#dedede" stroke-width="3.2"/></svg>
<div class="t" style="left:1295.30px;top:188.12px;font-size:15px;color:#000;font-weight:bold;transform:scaleX(0.7470);-webkit-text-stroke:0.5px #000;">1</div>
</body></html>
